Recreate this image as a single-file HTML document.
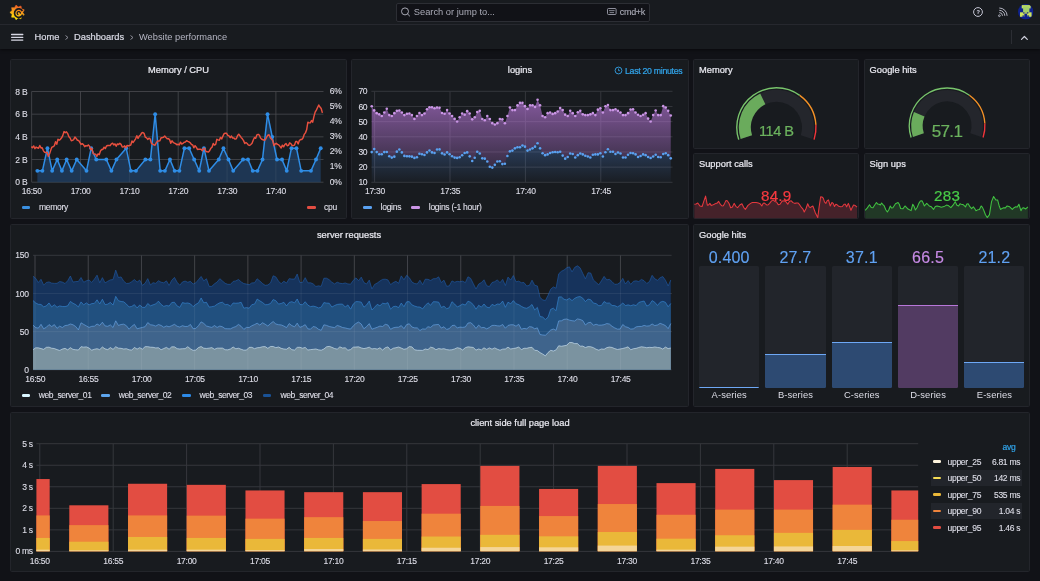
<!DOCTYPE html>
<html lang="en"><head><meta charset="utf-8"><title>Website performance - Dashboards - Grafana</title>
<style>
html,body{margin:0;padding:0}
body{width:1040px;height:581px;overflow:hidden;background:#111217;font-family:"Liberation Sans", Arial, sans-serif;position:relative;color:#dedee8}
#w{position:absolute;left:0;top:0;width:1040px;height:581px;will-change:transform}
.t{position:absolute;white-space:nowrap;line-height:1;margin:0;font-weight:400}
.p{position:absolute;box-sizing:border-box;background:#181b1f;border:1px solid #23252b;border-radius:1.5px}
.s{position:absolute;overflow:visible}
.b{position:absolute}
</style></head><body><div id="w">
<header>
<div class="b" style="left:0;top:0;width:1040px;height:49px;background:#181b1f;box-shadow:0 1px 3px rgba(0,0,0,.55)"></div>
<div class="b" style="left:0;top:24px;width:1040px;height:1px;background:#26282e"></div>
<svg class="s" style="left:10px;top:4.6px" width="15" height="15" viewBox="0 0 15 15" >
<defs><linearGradient id="lg" x1="0.2" y1="1" x2="0.5" y2="0"><stop offset="0" stop-color="#fff100"/><stop offset="0.45" stop-color="#fbb417"/><stop offset="1" stop-color="#f05a28"/></linearGradient></defs>
<polygon points="6.02,0.11 8.26,1.98 11.00,0.99 11.51,3.86 14.25,4.87 12.80,7.40 14.25,9.93 11.51,10.94 11.00,13.81 8.26,12.82 6.02,14.69 4.55,12.16 1.63,12.16 2.13,9.28 -0.10,7.40 2.13,5.52 1.63,2.64 4.55,2.64" fill="url(#lg)" stroke="url(#lg)" stroke-width="0.6" stroke-linejoin="round"/>
<path d="M12.7 9.6 A4.2 4.2 0 1 1 12.4 6.0" fill="none" stroke="#181b1f" stroke-width="1.7"/>
<path d="M10.3 8.6 A1.6 1.6 0 1 0 8.4 9.7" fill="none" stroke="#181b1f" stroke-width="1.3"/>
</svg>
<div class="b" style="left:395.5px;top:2.5px;width:254px;height:19px;box-sizing:border-box;background:#111217;border:1px solid #2c2e34;border-radius:2px"></div>
<svg class="s" style="left:400px;top:7px" width="10" height="10" viewBox="0 0 10 10" >
<circle cx="5" cy="4.4" r="3.5" fill="none" stroke="#b4b5c2" stroke-width="0.9"/><path d="M7.6 7 L9.6 9" stroke="#b4b5c2" stroke-width="0.9" stroke-linecap="round"/>
</svg>
<span class="t" style="left:413.80px;top:12.85px;font-size:9.3px;color:#a9aab6;transform:translate(0,-50%);">Search or jump to...</span>
<svg class="s" style="left:607.2px;top:8.4px" width="10" height="8" viewBox="0 0 10 8" >
<rect x="0.5" y="0.5" width="8.6" height="6" rx="1" fill="none" stroke="#9d9eab" stroke-width="0.9"/><path d="M2 2.6h5.6M2.6 4.6h4.4" stroke="#9d9eab" stroke-width="0.8"/>
</svg>
<span class="t" style="left:619.80px;top:11.55px;font-size:8.99px;color:#a9aab6;transform:translate(0,-50%);-webkit-text-stroke:0.12px #a9aab6;letter-spacing:-0.3px;">cmd+k</span>
<svg class="s" style="left:972px;top:6px" width="12" height="12" viewBox="0 0 12 12" >
<circle cx="6" cy="6" r="4.4" fill="none" stroke="#c4c5d3" stroke-width="1"/>
</svg>
<span class="t" style="left:978.10px;top:12.65px;font-size:5.6px;color:#c4c5d3;transform:translate(-50%,-50%);-webkit-text-stroke:0.12px #c4c5d3;font-weight:700;letter-spacing:0px;">?</span>
<svg class="s" style="left:996.6px;top:7.4px" width="11" height="11" viewBox="0 0 11 11" >
<circle cx="2.4" cy="8.7" r="0.9" fill="none" stroke="#c4c5d3" stroke-width="0.8"/><path d="M2.3 5.6 A3.2 3.2 0 0 1 5.5 8.8 M2.3 3.3 A5.5 5.5 0 0 1 7.8 8.8 M2.3 1 A7.8 7.8 0 0 1 10.1 8.8" fill="none" stroke="#c4c5d3" stroke-width="0.9"/>
</svg>
<svg class="s" style="left:1018px;top:3.8px" width="15.4" height="15.4" viewBox="0 0 15.4 15.4" >
<clipPath id="av"><circle cx="7.7" cy="7.7" r="7.7"/></clipPath>
<g clip-path="url(#av)"><rect x="0" y="0" width="15.4" height="15.4" fill="#0f228e"/>
<rect x="3.7" y="1.1" width="9" height="3.3" fill="#c3de62"/><rect x="5.1" y="2.4" width="6.3" height="5.9" fill="#a3d06a"/>
<rect x="2" y="8.3" width="11.6" height="4.5" fill="#cde45e"/><rect x="6.4" y="9.6" width="2.7" height="4" fill="#0f228e"/>
<rect x="5.2" y="8.3" width="1.2" height="1.3" fill="#0f228e"/><rect x="9.1" y="8.3" width="1.2" height="1.3" fill="#0f228e"/>
<rect x="4.4" y="11.5" width="2" height="1.3" fill="#0f228e"/><rect x="9.1" y="11.5" width="2" height="1.3" fill="#0f228e"/></g>
</svg>
</header>
<nav aria-label="Breadcrumbs">
<svg class="s" style="left:10px;top:32px" width="14" height="10" viewBox="0 0 14 10" >
<path d="M1.6 2.5h11.2M1.6 5.3h11.2M1.6 8.1h11.2" stroke="#d6d7e3" stroke-width="1.3" stroke-linecap="round"/>
</svg>
<span class="t" style="left:34.50px;top:37.85px;font-size:9.3px;color:#d8d9e4;transform:translate(0,-50%);-webkit-text-stroke:0.22px #d8d9e4;">Home</span>
<svg class="s" style="left:65.2px;top:35px" width="4" height="5" viewBox="0 0 4 5" >
<path d="M0.5 0.5 L3 2.5 L0.5 4.5" fill="none" stroke="#9a9ba6" stroke-width="0.9"/>
</svg>
<span class="t" style="left:74.00px;top:37.85px;font-size:9.3px;color:#d8d9e4;transform:translate(0,-50%);-webkit-text-stroke:0.22px #d8d9e4;">Dashboards</span>
<svg class="s" style="left:130.2px;top:35px" width="4" height="5" viewBox="0 0 4 5" >
<path d="M0.5 0.5 L3 2.5 L0.5 4.5" fill="none" stroke="#9a9ba6" stroke-width="0.9"/>
</svg>
<span class="t" style="left:139.00px;top:37.85px;font-size:9.3px;color:#b4b5c2;transform:translate(0,-50%);">Website performance</span>
<div class="b" style="left:1011px;top:30px;width:1px;height:14px;background:#2c2e34"></div>
<svg class="s" style="left:1020.2px;top:33.8px" width="9" height="8" viewBox="0 0 9 8" >
<path d="M1.5 5.4 L4.4 2.5 L7.3 5.4" fill="none" stroke="#d0d1de" stroke-width="1.2" stroke-linecap="round" stroke-linejoin="round"/>
</svg>
</nav>
<main>
<section aria-label="Memory / CPU">
<div class="p" style="left:10px;top:59px;width:337px;height:160px"></div>
<h2 class="t" style="left:178.50px;top:70.85px;font-size:9.3px;color:#e9e9f0;transform:translate(-50%,-50%);-webkit-text-stroke:0.22px #e9e9f0;">Memory / CPU</h2>
<svg class="s" style="left:0px;top:0px" width="1040" height="581" viewBox="0 0 1040 581" >
<path d="M31.65 182.20H323.5 M31.65 159.52H323.5 M31.65 136.85H323.5 M31.65 114.17H323.5 M31.65 91.50H323.5 M31.65 91.5V182.2 M80.50 91.5V182.2 M129.35 91.5V182.2 M178.20 91.5V182.2 M227.05 91.5V182.2 M275.90 91.5V182.2" stroke="#35373c" stroke-width="1" fill="none"/>
<path d="M37.36 170.86 L42.40 170.86 L47.45 148.19 L52.16 170.86 L57.21 159.52 L61.92 170.86 L66.64 159.52 L71.68 170.86 L76.73 159.52 L86.49 170.86 L91.20 148.19 L96.25 159.52 L106.35 159.52 L111.40 170.86 L116.44 159.52 L126.20 148.19 L130.91 170.86 L135.96 170.86 L145.39 159.52 L150.43 159.52 L155.15 114.17 L160.19 170.86 L164.91 170.86 L169.95 159.52 L174.67 170.86 L179.38 170.86 L184.42 148.19 L189.14 148.19 L194.18 159.52 L199.23 170.86 L203.94 148.19 L208.99 170.86 L218.75 159.52 L223.46 148.19 L228.51 159.52 L233.22 170.86 L242.98 159.52 L248.03 159.52 L252.74 170.86 L257.45 170.86 L262.50 159.52 L267.55 114.17 L272.26 136.85 L276.97 159.52 L282.02 159.52 L286.73 170.86 L291.45 148.19 L296.49 148.19 L301.20 170.86 L310.96 170.86 L316.01 159.52 L320.72 148.19 L320.72 182.20 L37.36 182.20 Z" fill="#1f3a59" fill-opacity="0.9"/>
<path d="M31.65 182.20H323.5 M31.65 159.52H323.5 M31.65 136.85H323.5 M31.65 114.17H323.5 M31.65 91.50H323.5 M31.65 91.5V182.2 M80.50 91.5V182.2 M129.35 91.5V182.2 M178.20 91.5V182.2 M227.05 91.5V182.2 M275.90 91.5V182.2" stroke="#ffffff" stroke-opacity="0.07" stroke-width="0.8" fill="none"/>
<path d="M37.36 170.86 L42.40 170.86 L47.45 148.19 L52.16 170.86 L57.21 159.52 L61.92 170.86 L66.64 159.52 L71.68 170.86 L76.73 159.52 L86.49 170.86 L91.20 148.19 L96.25 159.52 L106.35 159.52 L111.40 170.86 L116.44 159.52 L126.20 148.19 L130.91 170.86 L135.96 170.86 L145.39 159.52 L150.43 159.52 L155.15 114.17 L160.19 170.86 L164.91 170.86 L169.95 159.52 L174.67 170.86 L179.38 170.86 L184.42 148.19 L189.14 148.19 L194.18 159.52 L199.23 170.86 L203.94 148.19 L208.99 170.86 L218.75 159.52 L223.46 148.19 L228.51 159.52 L233.22 170.86 L242.98 159.52 L248.03 159.52 L252.74 170.86 L257.45 170.86 L262.50 159.52 L267.55 114.17 L272.26 136.85 L276.97 159.52 L282.02 159.52 L286.73 170.86 L291.45 148.19 L296.49 148.19 L301.20 170.86 L310.96 170.86 L316.01 159.52 L320.72 148.19" fill="none" stroke="#2f8de6" stroke-width="1.5" stroke-linejoin="round"/>
<g fill="#2f8de6"><circle cx="37.36" cy="170.86" r="1.95"/><circle cx="42.40" cy="170.86" r="1.95"/><circle cx="47.45" cy="148.19" r="1.95"/><circle cx="52.16" cy="170.86" r="1.95"/><circle cx="57.21" cy="159.52" r="1.95"/><circle cx="61.92" cy="170.86" r="1.95"/><circle cx="66.64" cy="159.52" r="1.95"/><circle cx="71.68" cy="170.86" r="1.95"/><circle cx="76.73" cy="159.52" r="1.95"/><circle cx="86.49" cy="170.86" r="1.95"/><circle cx="91.20" cy="148.19" r="1.95"/><circle cx="96.25" cy="159.52" r="1.95"/><circle cx="106.35" cy="159.52" r="1.95"/><circle cx="111.40" cy="170.86" r="1.95"/><circle cx="116.44" cy="159.52" r="1.95"/><circle cx="126.20" cy="148.19" r="1.95"/><circle cx="130.91" cy="170.86" r="1.95"/><circle cx="135.96" cy="170.86" r="1.95"/><circle cx="145.39" cy="159.52" r="1.95"/><circle cx="150.43" cy="159.52" r="1.95"/><circle cx="155.15" cy="114.17" r="1.95"/><circle cx="160.19" cy="170.86" r="1.95"/><circle cx="164.91" cy="170.86" r="1.95"/><circle cx="169.95" cy="159.52" r="1.95"/><circle cx="174.67" cy="170.86" r="1.95"/><circle cx="179.38" cy="170.86" r="1.95"/><circle cx="184.42" cy="148.19" r="1.95"/><circle cx="189.14" cy="148.19" r="1.95"/><circle cx="194.18" cy="159.52" r="1.95"/><circle cx="199.23" cy="170.86" r="1.95"/><circle cx="203.94" cy="148.19" r="1.95"/><circle cx="208.99" cy="170.86" r="1.95"/><circle cx="218.75" cy="159.52" r="1.95"/><circle cx="223.46" cy="148.19" r="1.95"/><circle cx="228.51" cy="159.52" r="1.95"/><circle cx="233.22" cy="170.86" r="1.95"/><circle cx="242.98" cy="159.52" r="1.95"/><circle cx="248.03" cy="159.52" r="1.95"/><circle cx="252.74" cy="170.86" r="1.95"/><circle cx="257.45" cy="170.86" r="1.95"/><circle cx="262.50" cy="159.52" r="1.95"/><circle cx="267.55" cy="114.17" r="1.95"/><circle cx="272.26" cy="136.85" r="1.95"/><circle cx="276.97" cy="159.52" r="1.95"/><circle cx="282.02" cy="159.52" r="1.95"/><circle cx="286.73" cy="170.86" r="1.95"/><circle cx="291.45" cy="148.19" r="1.95"/><circle cx="296.49" cy="148.19" r="1.95"/><circle cx="301.20" cy="170.86" r="1.95"/><circle cx="310.96" cy="170.86" r="1.95"/><circle cx="316.01" cy="159.52" r="1.95"/><circle cx="320.72" cy="148.19" r="1.95"/></g>
<path d="M31.30 146.67 L32.51 147.72 L33.72 145.92 L34.94 148.69 L36.15 147.05 L37.36 147.77 L38.58 148.25 L39.79 145.53 L41.00 147.91 L42.21 147.77 L43.43 150.85 L44.64 152.30 L45.85 152.43 L47.07 152.26 L48.28 156.34 L49.49 153.99 L50.71 150.36 L51.92 147.08 L53.13 146.73 L54.34 145.74 L55.56 141.79 L56.77 144.23 L57.98 139.29 L59.20 140.20 L60.41 139.32 L61.62 137.82 L62.84 135.37 L64.05 131.59 L65.26 132.65 L66.47 131.86 L67.69 133.61 L68.90 136.74 L70.11 137.99 L71.33 140.77 L72.54 140.42 L73.75 139.44 L74.96 137.07 L76.18 138.42 L77.39 140.27 L78.60 140.48 L79.82 142.40 L81.03 144.41 L82.24 143.68 L83.46 144.55 L84.67 146.74 L85.88 145.62 L87.09 146.10 L88.31 144.89 L89.52 146.16 L90.73 149.66 L91.95 148.37 L93.16 153.65 L94.37 154.01 L95.58 154.21 L96.80 156.43 L98.01 153.91 L99.22 154.72 L100.44 150.97 L101.65 149.55 L102.86 149.41 L104.08 147.17 L105.29 148.60 L106.50 146.03 L107.71 145.52 L108.93 145.36 L110.14 145.67 L111.35 143.82 L112.57 143.16 L113.78 144.94 L114.99 143.91 L116.21 146.29 L117.42 143.91 L118.63 144.47 L119.84 143.33 L121.06 144.38 L122.27 146.98 L123.48 146.88 L124.70 145.86 L125.91 147.92 L127.12 145.38 L128.33 145.94 L129.55 145.47 L130.76 145.04 L131.97 141.00 L133.19 142.44 L134.40 140.67 L135.61 138.79 L136.83 135.74 L138.04 138.40 L139.25 136.16 L140.46 135.06 L141.68 132.96 L142.89 132.55 L144.10 133.41 L145.32 137.16 L146.53 137.85 L147.74 139.36 L148.95 138.18 L150.17 138.82 L151.38 143.19 L152.59 144.04 L153.81 144.75 L155.02 145.30 L156.23 142.87 L157.45 141.07 L158.66 141.09 L159.87 140.82 L161.08 137.70 L162.30 137.66 L163.51 137.23 L164.72 136.00 L165.94 137.52 L167.15 138.67 L168.36 138.70 L169.57 139.54 L170.79 143.27 L172.00 140.78 L173.21 142.37 L174.43 143.06 L175.64 143.62 L176.85 144.79 L178.07 144.22 L179.28 144.92 L180.49 142.13 L181.70 144.01 L182.92 143.44 L184.13 142.30 L185.34 141.95 L186.56 140.65 L187.77 141.32 L188.98 141.87 L190.20 142.73 L191.41 144.44 L192.62 144.83 L193.83 147.76 L195.05 145.67 L196.26 147.19 L197.47 149.43 L198.69 149.26 L199.90 149.13 L201.11 149.34 L202.32 150.78 L203.54 148.43 L204.75 148.55 L205.96 151.51 L207.18 151.81 L208.39 152.13 L209.60 150.70 L210.82 148.32 L212.03 147.29 L213.24 143.54 L214.45 145.08 L215.67 144.44 L216.88 139.29 L218.09 139.85 L219.31 140.24 L220.52 137.38 L221.73 138.88 L222.94 136.08 L224.16 133.49 L225.37 133.30 L226.58 133.32 L227.80 135.33 L229.01 135.84 L230.22 137.64 L231.44 136.03 L232.65 138.00 L233.86 137.91 L235.07 139.13 L236.29 138.86 L237.50 135.64 L238.71 134.18 L239.93 135.78 L241.14 137.43 L242.35 138.83 L243.57 140.61 L244.78 143.47 L245.99 142.51 L247.20 143.47 L248.42 145.13 L249.63 145.40 L250.84 144.45 L252.06 143.18 L253.27 139.98 L254.48 137.50 L255.69 138.29 L256.91 134.86 L258.12 134.33 L259.33 135.01 L260.55 138.06 L261.76 139.21 L262.97 139.73 L264.19 140.40 L265.40 139.64 L266.61 137.14 L267.82 135.24 L269.04 134.77 L270.25 137.86 L271.46 139.12 L272.68 140.50 L273.89 145.52 L275.10 144.00 L276.31 143.36 L277.53 144.31 L278.74 144.85 L279.95 146.41 L281.17 148.00 L282.38 145.14 L283.59 146.81 L284.81 144.55 L286.02 143.56 L287.23 145.72 L288.44 145.42 L289.66 142.84 L290.87 143.51 L292.08 145.59 L293.30 145.50 L294.51 145.12 L295.72 141.52 L296.93 141.53 L298.15 143.91 L299.36 140.62 L300.57 139.56 L301.79 139.41 L303.00 137.99 L304.21 134.42 L305.43 132.89 L306.64 129.84 L307.85 122.25 L309.06 122.86 L310.28 122.84 L311.49 120.57 L312.70 122.14 L313.92 116.60 L315.13 112.16 L316.34 110.13 L317.56 107.56 L318.77 105.01 L319.98 107.01 L321.19 108.55 L322.41 112.93" fill="none" stroke="#e8503f" stroke-width="1.45" stroke-linejoin="round"/>
</svg>
<span class="t" style="left:27.30px;top:182.25px;font-size:8.56px;color:#dedee8;transform:translate(-100%,-50%);-webkit-text-stroke:0.12px #dedee8;letter-spacing:-0.3px;">0 B</span>
<span class="t" style="left:27.30px;top:159.57px;font-size:8.56px;color:#dedee8;transform:translate(-100%,-50%);-webkit-text-stroke:0.12px #dedee8;letter-spacing:-0.3px;">2 B</span>
<span class="t" style="left:27.30px;top:136.90px;font-size:8.56px;color:#dedee8;transform:translate(-100%,-50%);-webkit-text-stroke:0.12px #dedee8;letter-spacing:-0.3px;">4 B</span>
<span class="t" style="left:27.30px;top:114.22px;font-size:8.56px;color:#dedee8;transform:translate(-100%,-50%);-webkit-text-stroke:0.12px #dedee8;letter-spacing:-0.3px;">6 B</span>
<span class="t" style="left:27.30px;top:91.55px;font-size:8.56px;color:#dedee8;transform:translate(-100%,-50%);-webkit-text-stroke:0.12px #dedee8;letter-spacing:-0.3px;">8 B</span>
<span class="t" style="left:329.70px;top:181.55px;font-size:8.56px;color:#dedee8;transform:translate(0,-50%);-webkit-text-stroke:0.12px #dedee8;letter-spacing:-0.3px;">0%</span>
<span class="t" style="left:329.70px;top:166.43px;font-size:8.56px;color:#dedee8;transform:translate(0,-50%);-webkit-text-stroke:0.12px #dedee8;letter-spacing:-0.3px;">1%</span>
<span class="t" style="left:329.70px;top:151.32px;font-size:8.56px;color:#dedee8;transform:translate(0,-50%);-webkit-text-stroke:0.12px #dedee8;letter-spacing:-0.3px;">2%</span>
<span class="t" style="left:329.70px;top:136.20px;font-size:8.56px;color:#dedee8;transform:translate(0,-50%);-webkit-text-stroke:0.12px #dedee8;letter-spacing:-0.3px;">3%</span>
<span class="t" style="left:329.70px;top:121.08px;font-size:8.56px;color:#dedee8;transform:translate(0,-50%);-webkit-text-stroke:0.12px #dedee8;letter-spacing:-0.3px;">4%</span>
<span class="t" style="left:329.70px;top:105.97px;font-size:8.56px;color:#dedee8;transform:translate(0,-50%);-webkit-text-stroke:0.12px #dedee8;letter-spacing:-0.3px;">5%</span>
<span class="t" style="left:329.70px;top:90.85px;font-size:8.56px;color:#dedee8;transform:translate(0,-50%);-webkit-text-stroke:0.12px #dedee8;letter-spacing:-0.3px;">6%</span>
<span class="t" style="left:31.75px;top:191.35px;font-size:8.56px;color:#dedee8;transform:translate(-50%,-50%);-webkit-text-stroke:0.12px #dedee8;letter-spacing:-0.3px;">16:50</span>
<span class="t" style="left:80.60px;top:191.35px;font-size:8.56px;color:#dedee8;transform:translate(-50%,-50%);-webkit-text-stroke:0.12px #dedee8;letter-spacing:-0.3px;">17:00</span>
<span class="t" style="left:129.45px;top:191.35px;font-size:8.56px;color:#dedee8;transform:translate(-50%,-50%);-webkit-text-stroke:0.12px #dedee8;letter-spacing:-0.3px;">17:10</span>
<span class="t" style="left:178.30px;top:191.35px;font-size:8.56px;color:#dedee8;transform:translate(-50%,-50%);-webkit-text-stroke:0.12px #dedee8;letter-spacing:-0.3px;">17:20</span>
<span class="t" style="left:227.15px;top:191.35px;font-size:8.56px;color:#dedee8;transform:translate(-50%,-50%);-webkit-text-stroke:0.12px #dedee8;letter-spacing:-0.3px;">17:30</span>
<span class="t" style="left:276.00px;top:191.35px;font-size:8.56px;color:#dedee8;transform:translate(-50%,-50%);-webkit-text-stroke:0.12px #dedee8;letter-spacing:-0.3px;">17:40</span>
<div class="b" style="left:21.6px;top:206.2px;width:8.7px;height:2.4px;border-radius:1.2px;background:#3a8fe0"></div>
<span class="t" style="left:38.90px;top:207.45px;font-size:8.56px;color:#dedee8;transform:translate(0,-50%);-webkit-text-stroke:0.12px #dedee8;letter-spacing:-0.3px;">memory</span>
<div class="b" style="left:306.9px;top:206.2px;width:8.7px;height:2.4px;border-radius:1.2px;background:#e24d42"></div>
<span class="t" style="left:324.00px;top:207.45px;font-size:8.56px;color:#dedee8;transform:translate(0,-50%);-webkit-text-stroke:0.12px #dedee8;letter-spacing:-0.3px;">cpu</span>
</section>
<section aria-label="logins">
<div class="p" style="left:351px;top:59px;width:338px;height:160px"></div>
<h2 class="t" style="left:520.00px;top:70.85px;font-size:9.3px;color:#e9e9f0;transform:translate(-50%,-50%);-webkit-text-stroke:0.22px #e9e9f0;">logins</h2>
<svg class="s" style="left:614px;top:66px" width="9" height="9" viewBox="0 0 9 9" >
<circle cx="4.5" cy="4.5" r="3.4" fill="none" stroke="#33a2e5" stroke-width="0.9"/><path d="M4.5 2.6V4.7H6" fill="none" stroke="#33a2e5" stroke-width="0.8"/>
</svg>
<span class="t" style="left:625.00px;top:70.95px;font-size:8.77px;color:#31a4ea;transform:translate(0,-50%);-webkit-text-stroke:0.22px #31a4ea;letter-spacing:-0.3px;">Last 20 minutes</span>
<svg class="s" style="left:0px;top:0px" width="1040" height="581" viewBox="0 0 1040 581" >
<defs><linearGradient id="gp" x1="0" y1="0" x2="0" y2="1" gradientUnits="userSpaceOnUse"><stop offset="0" stop-color="#b877d9" stop-opacity="0.62"/><stop offset="1" stop-color="#b877d9" stop-opacity="0.18"/></linearGradient>
<linearGradient id="gb" x1="0" y1="0" x2="0" y2="1" gradientUnits="userSpaceOnUse"><stop offset="0" stop-color="#2c4a73" stop-opacity="0.95"/><stop offset="1" stop-color="#1f2c40" stop-opacity="0.6"/></linearGradient></defs>
<path d="M371.3 182.30H672.5 M371.3 167.13H672.5 M371.3 151.97H672.5 M371.3 136.80H672.5 M371.3 121.63H672.5 M371.3 106.47H672.5 M371.3 91.30H672.5 M374.60 91.3V182.3 M450.00 91.3V182.3 M525.40 91.3V182.3 M600.80 91.3V182.3" stroke="#35373c" stroke-width="1" fill="none"/>
<linearGradient id="gp2" gradientUnits="userSpaceOnUse" x1="0" y1="103.43333333333332" x2="0" y2="182.3"><stop offset="0" stop-color="#b877d9" stop-opacity="0.64"/><stop offset="1" stop-color="#b877d9" stop-opacity="0.10"/></linearGradient>
<linearGradient id="gb2" gradientUnits="userSpaceOnUse" x1="0" y1="144.38333333333333" x2="0" y2="182.3"><stop offset="0" stop-color="#5794f2" stop-opacity="0.30"/><stop offset="1" stop-color="#5794f2" stop-opacity="0.02"/></linearGradient>
<path d="M371.70 106.31 L374.21 110.41 L376.73 113.14 L379.24 114.35 L381.75 116.02 L384.26 112.53 L386.78 108.74 L389.29 115.11 L391.80 116.02 L394.32 113.14 L396.83 110.87 L399.34 110.56 L401.86 112.53 L404.37 115.11 L406.88 113.75 L409.39 113.44 L411.91 115.11 L414.42 118.90 L416.93 116.02 L419.45 112.99 L421.96 115.11 L424.47 113.44 L426.99 109.20 L429.50 107.22 L432.01 107.22 L434.52 108.29 L437.04 107.53 L439.55 107.83 L442.06 112.99 L444.58 113.75 L447.09 110.11 L449.60 113.44 L452.12 116.02 L454.63 118.90 L457.14 121.48 L459.65 117.23 L462.17 113.44 L464.68 114.66 L467.19 111.17 L469.71 113.44 L472.22 119.36 L474.73 117.23 L477.25 112.08 L479.76 110.87 L482.27 119.06 L484.78 120.27 L487.30 116.02 L489.81 119.06 L492.32 123.15 L494.84 124.52 L497.35 123.15 L499.86 119.06 L502.38 119.36 L504.89 123.30 L507.40 116.02 L509.91 107.53 L512.43 110.11 L514.94 110.11 L517.45 105.41 L519.97 102.83 L522.48 102.83 L524.99 106.16 L527.51 108.89 L530.02 105.25 L532.53 105.25 L535.04 106.92 L537.56 99.79 L540.07 105.25 L542.58 116.02 L545.10 117.23 L547.61 113.14 L550.12 112.53 L552.64 113.90 L555.15 113.14 L557.66 111.47 L560.17 107.98 L562.69 110.11 L565.20 114.66 L567.71 116.02 L570.23 110.87 L572.74 113.14 L575.25 116.02 L577.77 112.23 L580.28 110.87 L582.79 114.35 L585.30 115.11 L587.82 115.11 L590.33 114.35 L592.84 113.14 L595.36 115.11 L597.87 109.65 L600.38 108.29 L602.90 112.53 L605.41 106.31 L607.92 104.95 L610.43 110.11 L612.95 110.11 L615.46 109.20 L617.97 110.87 L620.49 112.53 L623.00 115.11 L625.51 115.11 L628.03 113.14 L630.54 109.50 L633.05 109.20 L635.57 112.53 L638.08 114.81 L640.59 116.02 L643.10 114.81 L645.62 113.14 L648.13 118.60 L650.64 121.48 L653.16 115.11 L655.67 110.56 L658.18 115.11 L660.69 115.11 L663.21 106.16 L665.72 107.53 L668.23 110.87 L670.75 115.57 L670.75 158.34 L668.23 155.15 L665.72 153.18 L663.21 153.94 L660.69 157.28 L658.18 156.97 L655.67 154.70 L653.16 156.52 L650.64 158.03 L648.13 156.97 L645.62 155.15 L643.10 154.39 L640.59 156.06 L638.08 156.97 L635.57 154.39 L633.05 153.18 L630.54 153.03 L628.03 154.70 L625.51 157.43 L623.00 157.43 L620.49 153.48 L617.97 152.57 L615.46 153.94 L612.95 151.81 L610.43 151.81 L607.92 149.24 L605.41 152.27 L602.90 156.52 L600.38 153.18 L597.87 154.39 L595.36 154.39 L592.84 154.70 L590.33 157.43 L587.82 156.52 L585.30 155.76 L582.79 154.39 L580.28 153.48 L577.77 155.15 L575.25 157.43 L572.74 153.94 L570.23 153.48 L567.71 156.97 L565.20 158.64 L562.69 155.61 L560.17 151.81 L557.66 152.27 L555.15 151.97 L552.64 152.27 L550.12 153.03 L547.61 154.39 L545.10 155.15 L542.58 153.18 L540.07 148.33 L537.56 143.32 L535.04 146.66 L532.53 148.33 L530.02 149.54 L527.51 150.60 L524.99 146.66 L522.48 145.44 L519.97 147.27 L517.45 147.27 L514.94 148.33 L512.43 150.60 L509.91 151.36 L507.40 156.06 L504.89 163.80 L502.38 164.10 L499.86 161.22 L497.35 161.52 L494.84 164.86 L492.32 167.59 L489.81 166.68 L487.30 161.52 L484.78 158.64 L482.27 158.34 L479.76 153.48 L477.25 151.81 L474.73 157.73 L472.22 161.07 L469.71 156.37 L467.19 152.42 L464.68 153.03 L462.17 155.30 L459.65 157.28 L457.14 157.88 L454.63 157.58 L452.12 156.21 L449.60 154.24 L447.09 152.42 L444.58 154.55 L442.06 153.33 L439.55 149.39 L437.04 149.54 L434.52 153.03 L432.01 152.42 L429.50 150.45 L426.99 152.42 L424.47 155.00 L421.96 154.24 L419.45 153.79 L416.93 157.28 L414.42 157.88 L411.91 156.67 L409.39 156.37 L406.88 156.21 L404.37 155.91 L401.86 152.42 L399.34 149.54 L396.83 151.66 L394.32 156.67 L391.80 157.58 L389.29 156.21 L386.78 151.97 L384.26 152.12 L381.75 154.24 L379.24 154.24 L376.73 152.12 L374.21 149.09 L371.70 152.12 Z" fill="url(#gp2)"/>
<path d="M371.70 152.12 L374.21 149.09 L376.73 152.12 L379.24 154.24 L381.75 154.24 L384.26 152.12 L386.78 151.97 L389.29 156.21 L391.80 157.58 L394.32 156.67 L396.83 151.66 L399.34 149.54 L401.86 152.42 L404.37 155.91 L406.88 156.21 L409.39 156.37 L411.91 156.67 L414.42 157.88 L416.93 157.28 L419.45 153.79 L421.96 154.24 L424.47 155.00 L426.99 152.42 L429.50 150.45 L432.01 152.42 L434.52 153.03 L437.04 149.54 L439.55 149.39 L442.06 153.33 L444.58 154.55 L447.09 152.42 L449.60 154.24 L452.12 156.21 L454.63 157.58 L457.14 157.88 L459.65 157.28 L462.17 155.30 L464.68 153.03 L467.19 152.42 L469.71 156.37 L472.22 161.07 L474.73 157.73 L477.25 151.81 L479.76 153.48 L482.27 158.34 L484.78 158.64 L487.30 161.52 L489.81 166.68 L492.32 167.59 L494.84 164.86 L497.35 161.52 L499.86 161.22 L502.38 164.10 L504.89 163.80 L507.40 156.06 L509.91 151.36 L512.43 150.60 L514.94 148.33 L517.45 147.27 L519.97 147.27 L522.48 145.44 L524.99 146.66 L527.51 150.60 L530.02 149.54 L532.53 148.33 L535.04 146.66 L537.56 143.32 L540.07 148.33 L542.58 153.18 L545.10 155.15 L547.61 154.39 L550.12 153.03 L552.64 152.27 L555.15 151.97 L557.66 152.27 L560.17 151.81 L562.69 155.61 L565.20 158.64 L567.71 156.97 L570.23 153.48 L572.74 153.94 L575.25 157.43 L577.77 155.15 L580.28 153.48 L582.79 154.39 L585.30 155.76 L587.82 156.52 L590.33 157.43 L592.84 154.70 L595.36 154.39 L597.87 154.39 L600.38 153.18 L602.90 156.52 L605.41 152.27 L607.92 149.24 L610.43 151.81 L612.95 151.81 L615.46 153.94 L617.97 152.57 L620.49 153.48 L623.00 157.43 L625.51 157.43 L628.03 154.70 L630.54 153.03 L633.05 153.18 L635.57 154.39 L638.08 156.97 L640.59 156.06 L643.10 154.39 L645.62 155.15 L648.13 156.97 L650.64 158.03 L653.16 156.52 L655.67 154.70 L658.18 156.97 L660.69 157.28 L663.21 153.94 L665.72 153.18 L668.23 155.15 L670.75 158.34 L670.75 182.30 L371.70 182.30 Z" fill="url(#gb2)"/>
<g fill="#ca95e5"><circle cx="371.70" cy="106.31" r="1.3"/><circle cx="374.21" cy="110.41" r="1.3"/><circle cx="376.73" cy="113.14" r="1.3"/><circle cx="379.24" cy="114.35" r="1.3"/><circle cx="381.75" cy="116.02" r="1.3"/><circle cx="384.26" cy="112.53" r="1.3"/><circle cx="386.78" cy="108.74" r="1.3"/><circle cx="389.29" cy="115.11" r="1.3"/><circle cx="391.80" cy="116.02" r="1.3"/><circle cx="394.32" cy="113.14" r="1.3"/><circle cx="396.83" cy="110.87" r="1.3"/><circle cx="399.34" cy="110.56" r="1.3"/><circle cx="401.86" cy="112.53" r="1.3"/><circle cx="404.37" cy="115.11" r="1.3"/><circle cx="406.88" cy="113.75" r="1.3"/><circle cx="409.39" cy="113.44" r="1.3"/><circle cx="411.91" cy="115.11" r="1.3"/><circle cx="414.42" cy="118.90" r="1.3"/><circle cx="416.93" cy="116.02" r="1.3"/><circle cx="419.45" cy="112.99" r="1.3"/><circle cx="421.96" cy="115.11" r="1.3"/><circle cx="424.47" cy="113.44" r="1.3"/><circle cx="426.99" cy="109.20" r="1.3"/><circle cx="429.50" cy="107.22" r="1.3"/><circle cx="432.01" cy="107.22" r="1.3"/><circle cx="434.52" cy="108.29" r="1.3"/><circle cx="437.04" cy="107.53" r="1.3"/><circle cx="439.55" cy="107.83" r="1.3"/><circle cx="442.06" cy="112.99" r="1.3"/><circle cx="444.58" cy="113.75" r="1.3"/><circle cx="447.09" cy="110.11" r="1.3"/><circle cx="449.60" cy="113.44" r="1.3"/><circle cx="452.12" cy="116.02" r="1.3"/><circle cx="454.63" cy="118.90" r="1.3"/><circle cx="457.14" cy="121.48" r="1.3"/><circle cx="459.65" cy="117.23" r="1.3"/><circle cx="462.17" cy="113.44" r="1.3"/><circle cx="464.68" cy="114.66" r="1.3"/><circle cx="467.19" cy="111.17" r="1.3"/><circle cx="469.71" cy="113.44" r="1.3"/><circle cx="472.22" cy="119.36" r="1.3"/><circle cx="474.73" cy="117.23" r="1.3"/><circle cx="477.25" cy="112.08" r="1.3"/><circle cx="479.76" cy="110.87" r="1.3"/><circle cx="482.27" cy="119.06" r="1.3"/><circle cx="484.78" cy="120.27" r="1.3"/><circle cx="487.30" cy="116.02" r="1.3"/><circle cx="489.81" cy="119.06" r="1.3"/><circle cx="492.32" cy="123.15" r="1.3"/><circle cx="494.84" cy="124.52" r="1.3"/><circle cx="497.35" cy="123.15" r="1.3"/><circle cx="499.86" cy="119.06" r="1.3"/><circle cx="502.38" cy="119.36" r="1.3"/><circle cx="504.89" cy="123.30" r="1.3"/><circle cx="507.40" cy="116.02" r="1.3"/><circle cx="509.91" cy="107.53" r="1.3"/><circle cx="512.43" cy="110.11" r="1.3"/><circle cx="514.94" cy="110.11" r="1.3"/><circle cx="517.45" cy="105.41" r="1.3"/><circle cx="519.97" cy="102.83" r="1.3"/><circle cx="522.48" cy="102.83" r="1.3"/><circle cx="524.99" cy="106.16" r="1.3"/><circle cx="527.51" cy="108.89" r="1.3"/><circle cx="530.02" cy="105.25" r="1.3"/><circle cx="532.53" cy="105.25" r="1.3"/><circle cx="535.04" cy="106.92" r="1.3"/><circle cx="537.56" cy="99.79" r="1.3"/><circle cx="540.07" cy="105.25" r="1.3"/><circle cx="542.58" cy="116.02" r="1.3"/><circle cx="545.10" cy="117.23" r="1.3"/><circle cx="547.61" cy="113.14" r="1.3"/><circle cx="550.12" cy="112.53" r="1.3"/><circle cx="552.64" cy="113.90" r="1.3"/><circle cx="555.15" cy="113.14" r="1.3"/><circle cx="557.66" cy="111.47" r="1.3"/><circle cx="560.17" cy="107.98" r="1.3"/><circle cx="562.69" cy="110.11" r="1.3"/><circle cx="565.20" cy="114.66" r="1.3"/><circle cx="567.71" cy="116.02" r="1.3"/><circle cx="570.23" cy="110.87" r="1.3"/><circle cx="572.74" cy="113.14" r="1.3"/><circle cx="575.25" cy="116.02" r="1.3"/><circle cx="577.77" cy="112.23" r="1.3"/><circle cx="580.28" cy="110.87" r="1.3"/><circle cx="582.79" cy="114.35" r="1.3"/><circle cx="585.30" cy="115.11" r="1.3"/><circle cx="587.82" cy="115.11" r="1.3"/><circle cx="590.33" cy="114.35" r="1.3"/><circle cx="592.84" cy="113.14" r="1.3"/><circle cx="595.36" cy="115.11" r="1.3"/><circle cx="597.87" cy="109.65" r="1.3"/><circle cx="600.38" cy="108.29" r="1.3"/><circle cx="602.90" cy="112.53" r="1.3"/><circle cx="605.41" cy="106.31" r="1.3"/><circle cx="607.92" cy="104.95" r="1.3"/><circle cx="610.43" cy="110.11" r="1.3"/><circle cx="612.95" cy="110.11" r="1.3"/><circle cx="615.46" cy="109.20" r="1.3"/><circle cx="617.97" cy="110.87" r="1.3"/><circle cx="620.49" cy="112.53" r="1.3"/><circle cx="623.00" cy="115.11" r="1.3"/><circle cx="625.51" cy="115.11" r="1.3"/><circle cx="628.03" cy="113.14" r="1.3"/><circle cx="630.54" cy="109.50" r="1.3"/><circle cx="633.05" cy="109.20" r="1.3"/><circle cx="635.57" cy="112.53" r="1.3"/><circle cx="638.08" cy="114.81" r="1.3"/><circle cx="640.59" cy="116.02" r="1.3"/><circle cx="643.10" cy="114.81" r="1.3"/><circle cx="645.62" cy="113.14" r="1.3"/><circle cx="648.13" cy="118.60" r="1.3"/><circle cx="650.64" cy="121.48" r="1.3"/><circle cx="653.16" cy="115.11" r="1.3"/><circle cx="655.67" cy="110.56" r="1.3"/><circle cx="658.18" cy="115.11" r="1.3"/><circle cx="660.69" cy="115.11" r="1.3"/><circle cx="663.21" cy="106.16" r="1.3"/><circle cx="665.72" cy="107.53" r="1.3"/><circle cx="668.23" cy="110.87" r="1.3"/><circle cx="670.75" cy="115.57" r="1.3"/></g>
<g fill="#5aa1f0"><circle cx="371.70" cy="152.12" r="1.3"/><circle cx="374.21" cy="149.09" r="1.3"/><circle cx="376.73" cy="152.12" r="1.3"/><circle cx="379.24" cy="154.24" r="1.3"/><circle cx="381.75" cy="154.24" r="1.3"/><circle cx="384.26" cy="152.12" r="1.3"/><circle cx="386.78" cy="151.97" r="1.3"/><circle cx="389.29" cy="156.21" r="1.3"/><circle cx="391.80" cy="157.58" r="1.3"/><circle cx="394.32" cy="156.67" r="1.3"/><circle cx="396.83" cy="151.66" r="1.3"/><circle cx="399.34" cy="149.54" r="1.3"/><circle cx="401.86" cy="152.42" r="1.3"/><circle cx="404.37" cy="155.91" r="1.3"/><circle cx="406.88" cy="156.21" r="1.3"/><circle cx="409.39" cy="156.37" r="1.3"/><circle cx="411.91" cy="156.67" r="1.3"/><circle cx="414.42" cy="157.88" r="1.3"/><circle cx="416.93" cy="157.28" r="1.3"/><circle cx="419.45" cy="153.79" r="1.3"/><circle cx="421.96" cy="154.24" r="1.3"/><circle cx="424.47" cy="155.00" r="1.3"/><circle cx="426.99" cy="152.42" r="1.3"/><circle cx="429.50" cy="150.45" r="1.3"/><circle cx="432.01" cy="152.42" r="1.3"/><circle cx="434.52" cy="153.03" r="1.3"/><circle cx="437.04" cy="149.54" r="1.3"/><circle cx="439.55" cy="149.39" r="1.3"/><circle cx="442.06" cy="153.33" r="1.3"/><circle cx="444.58" cy="154.55" r="1.3"/><circle cx="447.09" cy="152.42" r="1.3"/><circle cx="449.60" cy="154.24" r="1.3"/><circle cx="452.12" cy="156.21" r="1.3"/><circle cx="454.63" cy="157.58" r="1.3"/><circle cx="457.14" cy="157.88" r="1.3"/><circle cx="459.65" cy="157.28" r="1.3"/><circle cx="462.17" cy="155.30" r="1.3"/><circle cx="464.68" cy="153.03" r="1.3"/><circle cx="467.19" cy="152.42" r="1.3"/><circle cx="469.71" cy="156.37" r="1.3"/><circle cx="472.22" cy="161.07" r="1.3"/><circle cx="474.73" cy="157.73" r="1.3"/><circle cx="477.25" cy="151.81" r="1.3"/><circle cx="479.76" cy="153.48" r="1.3"/><circle cx="482.27" cy="158.34" r="1.3"/><circle cx="484.78" cy="158.64" r="1.3"/><circle cx="487.30" cy="161.52" r="1.3"/><circle cx="489.81" cy="166.68" r="1.3"/><circle cx="492.32" cy="167.59" r="1.3"/><circle cx="494.84" cy="164.86" r="1.3"/><circle cx="497.35" cy="161.52" r="1.3"/><circle cx="499.86" cy="161.22" r="1.3"/><circle cx="502.38" cy="164.10" r="1.3"/><circle cx="504.89" cy="163.80" r="1.3"/><circle cx="507.40" cy="156.06" r="1.3"/><circle cx="509.91" cy="151.36" r="1.3"/><circle cx="512.43" cy="150.60" r="1.3"/><circle cx="514.94" cy="148.33" r="1.3"/><circle cx="517.45" cy="147.27" r="1.3"/><circle cx="519.97" cy="147.27" r="1.3"/><circle cx="522.48" cy="145.44" r="1.3"/><circle cx="524.99" cy="146.66" r="1.3"/><circle cx="527.51" cy="150.60" r="1.3"/><circle cx="530.02" cy="149.54" r="1.3"/><circle cx="532.53" cy="148.33" r="1.3"/><circle cx="535.04" cy="146.66" r="1.3"/><circle cx="537.56" cy="143.32" r="1.3"/><circle cx="540.07" cy="148.33" r="1.3"/><circle cx="542.58" cy="153.18" r="1.3"/><circle cx="545.10" cy="155.15" r="1.3"/><circle cx="547.61" cy="154.39" r="1.3"/><circle cx="550.12" cy="153.03" r="1.3"/><circle cx="552.64" cy="152.27" r="1.3"/><circle cx="555.15" cy="151.97" r="1.3"/><circle cx="557.66" cy="152.27" r="1.3"/><circle cx="560.17" cy="151.81" r="1.3"/><circle cx="562.69" cy="155.61" r="1.3"/><circle cx="565.20" cy="158.64" r="1.3"/><circle cx="567.71" cy="156.97" r="1.3"/><circle cx="570.23" cy="153.48" r="1.3"/><circle cx="572.74" cy="153.94" r="1.3"/><circle cx="575.25" cy="157.43" r="1.3"/><circle cx="577.77" cy="155.15" r="1.3"/><circle cx="580.28" cy="153.48" r="1.3"/><circle cx="582.79" cy="154.39" r="1.3"/><circle cx="585.30" cy="155.76" r="1.3"/><circle cx="587.82" cy="156.52" r="1.3"/><circle cx="590.33" cy="157.43" r="1.3"/><circle cx="592.84" cy="154.70" r="1.3"/><circle cx="595.36" cy="154.39" r="1.3"/><circle cx="597.87" cy="154.39" r="1.3"/><circle cx="600.38" cy="153.18" r="1.3"/><circle cx="602.90" cy="156.52" r="1.3"/><circle cx="605.41" cy="152.27" r="1.3"/><circle cx="607.92" cy="149.24" r="1.3"/><circle cx="610.43" cy="151.81" r="1.3"/><circle cx="612.95" cy="151.81" r="1.3"/><circle cx="615.46" cy="153.94" r="1.3"/><circle cx="617.97" cy="152.57" r="1.3"/><circle cx="620.49" cy="153.48" r="1.3"/><circle cx="623.00" cy="157.43" r="1.3"/><circle cx="625.51" cy="157.43" r="1.3"/><circle cx="628.03" cy="154.70" r="1.3"/><circle cx="630.54" cy="153.03" r="1.3"/><circle cx="633.05" cy="153.18" r="1.3"/><circle cx="635.57" cy="154.39" r="1.3"/><circle cx="638.08" cy="156.97" r="1.3"/><circle cx="640.59" cy="156.06" r="1.3"/><circle cx="643.10" cy="154.39" r="1.3"/><circle cx="645.62" cy="155.15" r="1.3"/><circle cx="648.13" cy="156.97" r="1.3"/><circle cx="650.64" cy="158.03" r="1.3"/><circle cx="653.16" cy="156.52" r="1.3"/><circle cx="655.67" cy="154.70" r="1.3"/><circle cx="658.18" cy="156.97" r="1.3"/><circle cx="660.69" cy="157.28" r="1.3"/><circle cx="663.21" cy="153.94" r="1.3"/><circle cx="665.72" cy="153.18" r="1.3"/><circle cx="668.23" cy="155.15" r="1.3"/><circle cx="670.75" cy="158.34" r="1.3"/></g>
</svg>
<span class="t" style="left:367.30px;top:182.35px;font-size:8.56px;color:#dedee8;transform:translate(-100%,-50%);-webkit-text-stroke:0.12px #dedee8;letter-spacing:-0.3px;">10</span>
<span class="t" style="left:367.30px;top:167.18px;font-size:8.56px;color:#dedee8;transform:translate(-100%,-50%);-webkit-text-stroke:0.12px #dedee8;letter-spacing:-0.3px;">20</span>
<span class="t" style="left:367.30px;top:152.02px;font-size:8.56px;color:#dedee8;transform:translate(-100%,-50%);-webkit-text-stroke:0.12px #dedee8;letter-spacing:-0.3px;">30</span>
<span class="t" style="left:367.30px;top:136.85px;font-size:8.56px;color:#dedee8;transform:translate(-100%,-50%);-webkit-text-stroke:0.12px #dedee8;letter-spacing:-0.3px;">40</span>
<span class="t" style="left:367.30px;top:121.68px;font-size:8.56px;color:#dedee8;transform:translate(-100%,-50%);-webkit-text-stroke:0.12px #dedee8;letter-spacing:-0.3px;">50</span>
<span class="t" style="left:367.30px;top:106.52px;font-size:8.56px;color:#dedee8;transform:translate(-100%,-50%);-webkit-text-stroke:0.12px #dedee8;letter-spacing:-0.3px;">60</span>
<span class="t" style="left:367.30px;top:91.35px;font-size:8.56px;color:#dedee8;transform:translate(-100%,-50%);-webkit-text-stroke:0.12px #dedee8;letter-spacing:-0.3px;">70</span>
<span class="t" style="left:374.90px;top:191.35px;font-size:8.56px;color:#dedee8;transform:translate(-50%,-50%);-webkit-text-stroke:0.12px #dedee8;letter-spacing:-0.3px;">17:30</span>
<span class="t" style="left:450.30px;top:191.35px;font-size:8.56px;color:#dedee8;transform:translate(-50%,-50%);-webkit-text-stroke:0.12px #dedee8;letter-spacing:-0.3px;">17:35</span>
<span class="t" style="left:525.70px;top:191.35px;font-size:8.56px;color:#dedee8;transform:translate(-50%,-50%);-webkit-text-stroke:0.12px #dedee8;letter-spacing:-0.3px;">17:40</span>
<span class="t" style="left:601.10px;top:191.35px;font-size:8.56px;color:#dedee8;transform:translate(-50%,-50%);-webkit-text-stroke:0.12px #dedee8;letter-spacing:-0.3px;">17:45</span>
<div class="b" style="left:362.8px;top:206.2px;width:9.2px;height:2.4px;border-radius:1.2px;background:#5aa1f0"></div>
<span class="t" style="left:380.60px;top:207.45px;font-size:8.56px;color:#dedee8;transform:translate(0,-50%);-webkit-text-stroke:0.12px #dedee8;letter-spacing:-0.3px;">logins</span>
<div class="b" style="left:411px;top:206.2px;width:9.2px;height:2.4px;border-radius:1.2px;background:#ca95e5"></div>
<span class="t" style="left:428.80px;top:207.45px;font-size:8.56px;color:#dedee8;transform:translate(0,-50%);-webkit-text-stroke:0.12px #dedee8;letter-spacing:-0.3px;">logins (-1 hour)</span>
</section>
<section aria-label="Memory">
<div class="p" style="left:693px;top:59px;width:166px;height:90px"></div>
<h2 class="t" style="left:699.00px;top:70.85px;font-size:9.3px;color:#e9e9f0;transform:translate(0,-50%);-webkit-text-stroke:0.22px #e9e9f0;">Memory</h2>
<svg class="s" style="left:0px;top:0px" width="1040" height="581" viewBox="0 0 1040 581" >
<path d="M740.64 139.02 A37.60 37.60 0 1 1 812.16 139.02 L800.75 135.31 A25.60 25.60 0 1 0 752.05 135.31 Z" fill="#24262c"/>
<path d="M740.64 139.02 A37.60 37.60 0 0 1 760.22 93.46 L765.38 104.29 A25.60 25.60 0 0 0 752.05 135.31 Z" fill="#6aab5c"/>
<path d="M738.07 139.85 A40.30 40.30 0 0 1 800.13 94.83 L799.30 95.96 A38.90 38.90 0 0 0 739.40 139.42 Z" fill="#78c46c"/>
<path d="M800.13 94.83 A40.30 40.30 0 0 1 816.62 124.87 L815.22 124.96 A38.90 38.90 0 0 0 799.30 95.96 Z" fill="#f59227"/>
<path d="M816.62 124.87 A40.30 40.30 0 0 1 814.73 139.85 L813.40 139.42 A38.90 38.90 0 0 0 815.22 124.96 Z" fill="#f2353b"/>
</svg>
<span class="t" style="left:776.30px;top:131.45px;font-size:14.6px;color:#6cb35e;transform:translate(-50%,-50%);-webkit-text-stroke:0.22px #6cb35e;letter-spacing:-0.5px;">114 B</span>
</section>
<section aria-label="Google hits gauge">
<div class="p" style="left:864px;top:59px;width:166px;height:90px"></div>
<h2 class="t" style="left:869.60px;top:70.85px;font-size:9.3px;color:#e9e9f0;transform:translate(0,-50%);-webkit-text-stroke:0.22px #e9e9f0;">Google hits</h2>
<svg class="s" style="left:0px;top:0px" width="1040" height="581" viewBox="0 0 1040 581" >
<path d="M912.95 136.90 A35.91 35.91 0 1 1 981.25 136.90 L970.35 133.35 A24.45 24.45 0 1 0 923.85 133.35 Z" fill="#24262c"/>
<path d="M912.95 136.90 A35.91 35.91 0 0 1 913.93 112.06 L924.51 116.44 A24.45 24.45 0 0 0 923.85 133.35 Z" fill="#6aab5c"/>
<path d="M910.50 137.69 A38.49 38.49 0 0 1 969.76 94.69 L968.97 95.77 A37.15 37.15 0 0 0 911.77 137.28 Z" fill="#78c46c"/>
<path d="M969.76 94.69 A38.49 38.49 0 0 1 985.51 123.38 L984.18 123.47 A37.15 37.15 0 0 0 968.97 95.77 Z" fill="#f59227"/>
<path d="M985.51 123.38 A38.49 38.49 0 0 1 983.70 137.69 L982.43 137.28 A37.15 37.15 0 0 0 984.18 123.47 Z" fill="#f2353b"/>
</svg>
<span class="t" style="left:947.00px;top:130.65px;font-size:17px;color:#6cb35e;transform:translate(-50%,-50%);-webkit-text-stroke:0.22px #6cb35e;letter-spacing:-0.6px;">57.1</span>
</section>
<section aria-label="Support calls">
<div class="p" style="left:693px;top:153px;width:166px;height:66px"></div>
<h2 class="t" style="left:699.00px;top:164.85px;font-size:9.3px;color:#e9e9f0;transform:translate(0,-50%);-webkit-text-stroke:0.22px #e9e9f0;">Support calls</h2>
<svg class="s" style="left:0px;top:0px" width="1040" height="581" viewBox="0 0 1040 581" >
<path d="M694.33 204.25 L696.06 204.01 L697.79 203.04 L699.95 205.98 L702.11 206.50 L703.85 201.17 L705.58 196.11 L707.31 205.11 L708.61 204.91 L709.90 203.38 L711.20 205.61 L712.50 205.11 L714.23 204.31 L715.96 203.38 L717.26 203.07 L718.56 201.31 L720.29 204.35 L722.02 205.98 L723.32 205.80 L724.61 203.38 L725.91 200.64 L727.21 200.79 L728.94 203.22 L730.67 207.71 L732.40 207.09 L734.13 203.38 L735.86 206.31 L737.59 207.71 L739.76 204.97 L741.92 203.73 L743.65 207.34 L745.38 209.44 L747.98 205.38 L750.57 203.38 L752.31 202.51 L754.04 202.52 L756.20 202.59 L758.36 203.04 L760.09 203.66 L761.82 205.98 L763.12 203.38 L764.42 203.04 L765.72 204.10 L767.02 205.11 L768.31 204.71 L769.61 203.38 L771.34 201.09 L773.07 199.92 L774.80 201.46 L776.54 202.00 L778.27 204.62 L780.00 204.25 L782.16 201.13 L784.32 200.79 L786.05 201.83 L787.78 204.25 L789.52 201.24 L791.25 200.79 L792.98 202.64 L794.71 203.38 L796.44 202.94 L798.17 203.04 L799.90 205.18 L801.63 207.71 L802.93 209.08 L804.23 212.04 L805.96 208.75 L807.69 203.73 L808.99 206.53 L810.28 207.71 L811.58 206.68 L812.88 205.98 L815.30 212.79 L817.73 217.57 L819.20 206.35 L820.67 196.81 L821.97 197.01 L823.26 198.19 L824.56 202.21 L825.86 203.38 L827.16 200.80 L828.46 199.92 L830.19 205.98 L831.92 202.52 L833.22 203.40 L834.51 206.50 L835.81 204.17 L837.11 204.77 L838.84 206.34 L840.57 206.84 L842.30 206.54 L844.03 204.25 L845.33 204.15 L846.63 206.84 L848.36 203.38 L849.66 206.78 L850.96 210.31 L852.25 207.39 L853.55 205.11 L855.28 205.62 L857.01 207.19 L857.01 218.20 L694.33 218.20 Z" fill="#45222a"/>
<path d="M694.33 204.25 L696.06 204.01 L697.79 203.04 L699.95 205.98 L702.11 206.50 L703.85 201.17 L705.58 196.11 L707.31 205.11 L708.61 204.91 L709.90 203.38 L711.20 205.61 L712.50 205.11 L714.23 204.31 L715.96 203.38 L717.26 203.07 L718.56 201.31 L720.29 204.35 L722.02 205.98 L723.32 205.80 L724.61 203.38 L725.91 200.64 L727.21 200.79 L728.94 203.22 L730.67 207.71 L732.40 207.09 L734.13 203.38 L735.86 206.31 L737.59 207.71 L739.76 204.97 L741.92 203.73 L743.65 207.34 L745.38 209.44 L747.98 205.38 L750.57 203.38 L752.31 202.51 L754.04 202.52 L756.20 202.59 L758.36 203.04 L760.09 203.66 L761.82 205.98 L763.12 203.38 L764.42 203.04 L765.72 204.10 L767.02 205.11 L768.31 204.71 L769.61 203.38 L771.34 201.09 L773.07 199.92 L774.80 201.46 L776.54 202.00 L778.27 204.62 L780.00 204.25 L782.16 201.13 L784.32 200.79 L786.05 201.83 L787.78 204.25 L789.52 201.24 L791.25 200.79 L792.98 202.64 L794.71 203.38 L796.44 202.94 L798.17 203.04 L799.90 205.18 L801.63 207.71 L802.93 209.08 L804.23 212.04 L805.96 208.75 L807.69 203.73 L808.99 206.53 L810.28 207.71 L811.58 206.68 L812.88 205.98 L815.30 212.79 L817.73 217.57 L819.20 206.35 L820.67 196.81 L821.97 197.01 L823.26 198.19 L824.56 202.21 L825.86 203.38 L827.16 200.80 L828.46 199.92 L830.19 205.98 L831.92 202.52 L833.22 203.40 L834.51 206.50 L835.81 204.17 L837.11 204.77 L838.84 206.34 L840.57 206.84 L842.30 206.54 L844.03 204.25 L845.33 204.15 L846.63 206.84 L848.36 203.38 L849.66 206.78 L850.96 210.31 L852.25 207.39 L853.55 205.11 L855.28 205.62 L857.01 207.19" fill="none" stroke="#e4383e" stroke-width="1.05" stroke-linejoin="round"/>
</svg>
<span class="t" style="left:776.20px;top:195.75px;font-size:15.2px;color:#f53a40;transform:translate(-50%,-50%);-webkit-text-stroke:0.22px #f53a40;letter-spacing:0.2px;">84.9</span>
</section>
<section aria-label="Sign ups">
<div class="p" style="left:864px;top:153px;width:166px;height:66px"></div>
<h2 class="t" style="left:869.60px;top:164.85px;font-size:9.3px;color:#e9e9f0;transform:translate(0,-50%);-webkit-text-stroke:0.22px #e9e9f0;">Sign ups</h2>
<svg class="s" style="left:0px;top:0px" width="1040" height="581" viewBox="0 0 1040 581" >
<path d="M865.19 210.31 L867.36 207.90 L869.52 204.77 L871.25 207.45 L872.98 207.71 L874.71 204.98 L876.44 202.52 L877.74 204.04 L879.04 204.25 L880.34 205.00 L881.63 203.04 L882.93 204.57 L884.23 205.98 L885.79 209.74 L887.35 212.04 L888.82 209.72 L890.29 205.98 L891.59 207.96 L892.88 207.71 L895.48 203.67 L898.08 202.52 L899.37 204.52 L900.67 208.57 L902.83 208.82 L905.00 205.98 L908.03 209.08 L911.06 210.65 L912.79 204.25 L914.08 206.36 L915.38 209.96 L917.11 207.43 L918.84 203.38 L920.40 201.05 L921.96 200.79 L923.17 202.95 L924.38 205.98 L926.63 203.38 L927.93 204.50 L929.23 205.98 L931.39 206.86 L933.55 209.44 L935.29 206.58 L937.02 205.98 L939.18 206.61 L941.34 207.19 L943.94 206.61 L946.54 205.11 L948.70 205.85 L950.86 207.71 L953.03 205.18 L955.19 201.65 L956.92 205.32 L958.65 205.98 L959.95 203.73 L961.25 204.25 L963.41 204.86 L965.57 206.84 L966.87 204.01 L968.17 203.73 L969.90 206.70 L971.63 208.57 L973.36 206.84 L974.66 208.48 L975.96 210.65 L977.69 209.86 L979.42 209.44 L981.15 205.98 L982.45 207.35 L983.75 210.31 L985.48 214.80 L987.21 217.57 L989.46 214.63 L991.53 201.65 L993.61 196.46 L995.86 199.92 L997.59 199.92 L999.06 205.49 L1000.53 209.44 L1002.09 208.41 L1003.65 207.71 L1005.38 207.86 L1007.11 205.98 L1009.71 206.87 L1012.30 209.44 L1014.03 207.66 L1015.76 206.84 L1017.32 206.97 L1018.88 204.25 L1020.96 210.65 L1022.25 208.33 L1023.55 207.71 L1025.80 208.92 L1027.88 206.84 L1027.88 218.20 L865.19 218.20 Z" fill="#213826"/>
<path d="M865.19 210.31 L867.36 207.90 L869.52 204.77 L871.25 207.45 L872.98 207.71 L874.71 204.98 L876.44 202.52 L877.74 204.04 L879.04 204.25 L880.34 205.00 L881.63 203.04 L882.93 204.57 L884.23 205.98 L885.79 209.74 L887.35 212.04 L888.82 209.72 L890.29 205.98 L891.59 207.96 L892.88 207.71 L895.48 203.67 L898.08 202.52 L899.37 204.52 L900.67 208.57 L902.83 208.82 L905.00 205.98 L908.03 209.08 L911.06 210.65 L912.79 204.25 L914.08 206.36 L915.38 209.96 L917.11 207.43 L918.84 203.38 L920.40 201.05 L921.96 200.79 L923.17 202.95 L924.38 205.98 L926.63 203.38 L927.93 204.50 L929.23 205.98 L931.39 206.86 L933.55 209.44 L935.29 206.58 L937.02 205.98 L939.18 206.61 L941.34 207.19 L943.94 206.61 L946.54 205.11 L948.70 205.85 L950.86 207.71 L953.03 205.18 L955.19 201.65 L956.92 205.32 L958.65 205.98 L959.95 203.73 L961.25 204.25 L963.41 204.86 L965.57 206.84 L966.87 204.01 L968.17 203.73 L969.90 206.70 L971.63 208.57 L973.36 206.84 L974.66 208.48 L975.96 210.65 L977.69 209.86 L979.42 209.44 L981.15 205.98 L982.45 207.35 L983.75 210.31 L985.48 214.80 L987.21 217.57 L989.46 214.63 L991.53 201.65 L993.61 196.46 L995.86 199.92 L997.59 199.92 L999.06 205.49 L1000.53 209.44 L1002.09 208.41 L1003.65 207.71 L1005.38 207.86 L1007.11 205.98 L1009.71 206.87 L1012.30 209.44 L1014.03 207.66 L1015.76 206.84 L1017.32 206.97 L1018.88 204.25 L1020.96 210.65 L1022.25 208.33 L1023.55 207.71 L1025.80 208.92 L1027.88 206.84" fill="none" stroke="#41c241" stroke-width="1.05" stroke-linejoin="round"/>
</svg>
<span class="t" style="left:947.20px;top:195.75px;font-size:15.2px;color:#48cc48;transform:translate(-50%,-50%);-webkit-text-stroke:0.22px #48cc48;letter-spacing:0.3px;">283</span>
</section>
<section aria-label="server requests">
<div class="p" style="left:10px;top:224px;width:679px;height:183px"></div>
<h2 class="t" style="left:349.00px;top:235.75px;font-size:9.3px;color:#e9e9f0;transform:translate(-50%,-50%);-webkit-text-stroke:0.22px #e9e9f0;">server requests</h2>
<svg class="s" style="left:0px;top:0px" width="1040" height="581" viewBox="0 0 1040 581" >
<path d="M33.0 369.80H671.6 M33.0 331.63H671.6 M33.0 293.47H671.6 M33.0 255.30H671.6 M35.00 255.3V369.8 M88.22 255.3V369.8 M141.44 255.3V369.8 M194.66 255.3V369.8 M247.88 255.3V369.8 M301.10 255.3V369.8 M354.32 255.3V369.8 M407.54 255.3V369.8 M460.76 255.3V369.8 M513.98 255.3V369.8 M567.20 255.3V369.8 M620.42 255.3V369.8" stroke="#35373c" stroke-width="1" fill="none"/>
<path d="M33.00 276.18 L35.67 278.32 L38.34 282.51 L41.01 279.34 L43.67 285.14 L46.34 282.54 L49.01 281.92 L51.68 283.17 L54.35 283.39 L57.02 283.35 L59.69 281.56 L62.35 282.10 L65.02 283.57 L67.69 280.73 L70.36 276.01 L73.03 282.07 L75.70 281.57 L78.37 281.47 L81.04 277.50 L83.70 282.26 L86.37 280.75 L89.04 280.04 L91.71 282.42 L94.38 279.15 L97.05 275.15 L99.72 282.74 L102.38 277.64 L105.05 282.87 L107.72 281.25 L110.39 279.89 L113.06 279.57 L115.73 270.11 L118.40 277.56 L121.06 276.93 L123.73 281.21 L126.40 283.48 L129.07 283.29 L131.74 281.65 L134.41 279.60 L137.08 282.11 L139.74 280.09 L142.41 285.37 L145.08 283.24 L147.75 278.63 L150.42 284.97 L153.09 282.69 L155.76 283.38 L158.43 280.73 L161.09 282.19 L163.76 282.82 L166.43 280.87 L169.10 285.44 L171.77 280.27 L174.44 277.43 L177.11 282.27 L179.77 285.24 L182.44 281.96 L185.11 281.09 L187.78 282.25 L190.45 281.37 L193.12 284.08 L195.79 282.88 L198.45 279.71 L201.12 276.46 L203.79 280.92 L206.46 278.75 L209.13 286.36 L211.80 286.36 L214.47 283.82 L217.13 282.02 L219.80 278.69 L222.47 281.00 L225.14 283.33 L227.81 284.34 L230.48 284.35 L233.15 281.44 L235.82 280.92 L238.48 279.47 L241.15 281.89 L243.82 283.60 L246.49 284.08 L249.16 284.79 L251.83 282.89 L254.50 282.81 L257.16 278.80 L259.83 281.03 L262.50 283.50 L265.17 285.36 L267.84 284.97 L270.51 282.98 L273.18 275.79 L275.84 276.92 L278.51 281.29 L281.18 283.69 L283.85 281.25 L286.52 283.06 L289.19 278.65 L291.86 279.07 L294.52 279.12 L297.19 274.06 L299.86 282.59 L302.53 282.46 L305.20 277.67 L307.87 282.88 L310.54 282.77 L313.21 283.93 L315.87 286.47 L318.54 285.86 L321.21 286.39 L323.88 278.24 L326.55 278.21 L329.22 279.72 L331.89 282.25 L334.55 283.90 L337.22 282.23 L339.89 283.25 L342.56 283.60 L345.23 282.96 L347.90 283.91 L350.57 284.23 L353.23 280.42 L355.90 277.87 L358.57 280.66 L361.24 277.13 L363.91 282.57 L366.58 283.99 L369.25 280.10 L371.91 288.93 L374.58 284.48 L377.25 283.02 L379.92 281.06 L382.59 279.38 L385.26 279.21 L387.93 279.93 L390.59 284.63 L393.26 282.59 L395.93 281.32 L398.60 283.30 L401.27 275.86 L403.94 279.79 L406.61 275.33 L409.28 277.70 L411.94 282.07 L414.61 283.52 L417.28 283.97 L419.95 280.24 L422.62 284.70 L425.29 279.20 L427.96 279.33 L430.62 280.50 L433.29 278.77 L435.96 278.63 L438.63 276.87 L441.30 282.53 L443.97 280.17 L446.64 286.32 L449.30 285.83 L451.97 280.92 L454.64 282.20 L457.31 281.37 L459.98 281.80 L462.65 281.11 L465.32 282.70 L467.98 276.79 L470.65 278.39 L473.32 283.74 L475.99 289.04 L478.66 284.12 L481.33 282.60 L484.00 279.82 L486.67 285.66 L489.33 286.60 L492.00 282.55 L494.67 281.70 L497.34 279.88 L500.01 282.69 L502.68 279.40 L505.35 285.57 L508.01 277.08 L510.68 280.05 L513.35 275.52 L516.02 281.83 L518.69 281.15 L521.36 282.69 L524.03 282.60 L526.69 286.01 L529.36 285.35 L532.03 280.17 L534.70 285.35 L537.37 285.95 L540.04 297.48 L542.71 299.87 L545.37 300.59 L548.04 295.36 L550.71 289.15 L553.38 286.96 L556.05 288.22 L558.72 273.81 L561.39 271.30 L564.06 270.03 L566.72 267.86 L569.39 266.84 L572.06 271.85 L574.73 267.36 L577.40 265.84 L580.07 267.81 L582.74 273.38 L585.40 278.81 L588.07 272.73 L590.74 273.07 L593.41 280.04 L596.08 282.42 L598.75 284.80 L601.42 280.86 L604.08 276.38 L606.75 279.86 L609.42 279.37 L612.09 281.67 L614.76 284.37 L617.43 284.15 L620.10 282.55 L622.76 278.37 L625.43 284.00 L628.10 280.59 L630.77 284.40 L633.44 281.27 L636.11 280.84 L638.78 281.55 L641.45 279.40 L644.11 280.77 L646.78 283.48 L649.45 281.63 L652.12 275.34 L654.79 278.82 L657.46 280.30 L660.13 277.69 L662.79 276.59 L665.46 280.24 L668.13 285.98 L670.80 279.99 L670.80 369.80 L33.00 369.80 Z" fill="#16335c"/>
<path d="M33.00 300.55 L35.67 302.94 L38.34 304.29 L41.01 304.45 L43.67 306.87 L46.34 305.87 L49.01 302.96 L51.68 306.93 L54.35 304.76 L57.02 307.26 L59.69 305.95 L62.35 306.51 L65.02 306.58 L67.69 305.83 L70.36 301.46 L73.03 303.29 L75.70 304.60 L78.37 306.95 L81.04 301.92 L83.70 304.89 L86.37 302.88 L89.04 304.92 L91.71 303.61 L94.38 303.38 L97.05 299.80 L99.72 303.95 L102.38 299.28 L105.05 304.66 L107.72 304.16 L110.39 302.37 L113.06 305.09 L115.73 296.37 L118.40 300.68 L121.06 301.50 L123.73 301.84 L126.40 304.07 L129.07 306.96 L131.74 306.41 L134.41 304.65 L137.08 307.98 L139.74 304.97 L142.41 307.34 L145.08 307.42 L147.75 303.49 L150.42 305.81 L153.09 304.82 L155.76 303.93 L158.43 301.15 L161.09 304.42 L163.76 306.40 L166.43 305.54 L169.10 306.05 L171.77 302.53 L174.44 302.28 L177.11 306.00 L179.77 307.34 L182.44 302.57 L185.11 303.27 L187.78 302.96 L190.45 303.83 L193.12 306.64 L195.79 304.37 L198.45 302.92 L201.12 297.96 L203.79 302.81 L206.46 302.27 L209.13 307.09 L211.80 306.70 L214.47 306.15 L217.13 304.24 L219.80 302.79 L222.47 302.27 L225.14 304.69 L227.81 304.44 L230.48 306.25 L233.15 302.97 L235.82 303.25 L238.48 303.00 L241.15 302.30 L243.82 308.16 L246.49 307.61 L249.16 308.19 L251.83 304.64 L254.50 304.17 L257.16 299.07 L259.83 300.86 L262.50 302.45 L265.17 304.73 L267.84 304.59 L270.51 303.48 L273.18 299.57 L275.84 300.72 L278.51 304.07 L281.18 303.49 L283.85 302.29 L286.52 305.96 L289.19 302.43 L291.86 301.70 L294.52 302.89 L297.19 299.00 L299.86 304.45 L302.53 304.75 L305.20 301.74 L307.87 305.15 L310.54 306.65 L313.21 306.12 L315.87 306.75 L318.54 307.96 L321.21 307.18 L323.88 302.58 L326.55 303.13 L329.22 303.27 L331.89 307.08 L334.55 305.52 L337.22 304.44 L339.89 304.12 L342.56 304.14 L345.23 306.99 L347.90 304.98 L350.57 309.18 L353.23 304.07 L355.90 301.63 L358.57 301.67 L361.24 302.17 L363.91 307.15 L366.58 304.97 L369.25 301.07 L371.91 310.02 L374.58 307.25 L377.25 304.36 L379.92 305.79 L382.59 303.24 L385.26 303.78 L387.93 302.67 L390.59 309.18 L393.26 306.61 L395.93 306.21 L398.60 307.59 L401.27 303.05 L403.94 306.71 L406.61 301.86 L409.28 301.61 L411.94 304.90 L414.61 306.07 L417.28 306.91 L419.95 307.08 L422.62 308.83 L425.29 305.47 L427.96 302.79 L430.62 305.22 L433.29 301.72 L435.96 301.79 L438.63 302.15 L441.30 307.46 L443.97 306.18 L446.64 308.73 L449.30 307.69 L451.97 301.71 L454.64 304.05 L457.31 306.99 L459.98 305.61 L462.65 304.04 L465.32 305.09 L467.98 301.20 L470.65 302.32 L473.32 304.73 L475.99 309.17 L478.66 305.25 L481.33 307.13 L484.00 303.99 L486.67 307.11 L489.33 307.80 L492.00 304.39 L494.67 305.58 L497.34 304.03 L500.01 304.27 L502.68 301.06 L505.35 307.28 L508.01 302.18 L510.68 303.80 L513.35 300.59 L516.02 303.75 L518.69 304.62 L521.36 306.32 L524.03 307.72 L526.69 308.27 L529.36 306.81 L532.03 304.48 L534.70 309.96 L537.37 307.39 L540.04 316.57 L542.71 317.00 L545.37 319.56 L548.04 317.18 L550.71 309.27 L553.38 308.21 L556.05 310.76 L558.72 296.95 L561.39 296.92 L564.06 299.32 L566.72 299.94 L569.39 298.36 L572.06 300.63 L574.73 298.32 L577.40 297.04 L580.07 296.56 L582.74 298.14 L585.40 301.55 L588.07 299.10 L590.74 299.75 L593.41 303.08 L596.08 303.58 L598.75 305.75 L601.42 305.49 L604.08 301.53 L606.75 303.17 L609.42 303.00 L612.09 305.50 L614.76 305.62 L617.43 306.89 L620.10 305.43 L622.76 302.95 L625.43 305.61 L628.10 304.86 L630.77 305.73 L633.44 304.77 L636.11 305.59 L638.78 302.47 L641.45 301.61 L644.11 301.06 L646.78 306.09 L649.45 304.76 L652.12 300.64 L654.79 302.22 L657.46 305.49 L660.13 302.28 L662.79 301.34 L665.46 302.31 L668.13 306.75 L670.80 303.44 L670.80 369.80 L33.00 369.80 Z" fill="#21507f"/>
<path d="M33.00 325.11 L35.67 327.59 L38.34 328.13 L41.01 324.34 L43.67 328.79 L46.34 327.31 L49.01 324.58 L51.68 326.56 L54.35 324.62 L57.02 328.33 L59.69 326.17 L62.35 327.53 L65.02 325.54 L67.69 325.24 L70.36 324.00 L73.03 324.77 L75.70 326.53 L78.37 329.85 L81.04 322.80 L83.70 324.42 L86.37 325.89 L89.04 327.43 L91.71 326.33 L94.38 326.18 L97.05 324.02 L99.72 325.46 L102.38 322.22 L105.05 325.94 L107.72 326.31 L110.39 324.90 L113.06 327.50 L115.73 320.80 L118.40 325.44 L121.06 324.51 L123.73 324.18 L126.40 325.71 L129.07 329.22 L131.74 326.38 L134.41 324.40 L137.08 328.81 L139.74 328.07 L142.41 327.45 L145.08 326.68 L147.75 322.59 L150.42 324.73 L153.09 325.14 L155.76 326.13 L158.43 324.52 L161.09 325.41 L163.76 327.22 L166.43 325.97 L169.10 326.82 L171.77 325.65 L174.44 324.32 L177.11 326.26 L179.77 327.05 L182.44 325.70 L185.11 326.51 L187.78 326.40 L190.45 324.45 L193.12 328.74 L195.79 328.41 L198.45 325.72 L201.12 321.90 L203.79 323.42 L206.46 326.01 L209.13 326.77 L211.80 327.41 L214.47 325.55 L217.13 327.43 L219.80 326.05 L222.47 326.84 L225.14 328.65 L227.81 328.78 L230.48 328.82 L233.15 327.48 L235.82 326.54 L238.48 324.42 L241.15 326.37 L243.82 329.38 L246.49 327.39 L249.16 327.50 L251.83 325.74 L254.50 324.60 L257.16 323.19 L259.83 325.08 L262.50 322.75 L265.17 324.24 L267.84 326.02 L270.51 323.55 L273.18 321.54 L275.84 323.99 L278.51 324.68 L281.18 324.93 L283.85 326.06 L286.52 327.59 L289.19 323.58 L291.86 325.62 L294.52 326.81 L297.19 323.16 L299.86 327.39 L302.53 326.30 L305.20 324.67 L307.87 328.85 L310.54 329.18 L313.21 326.46 L315.87 327.20 L318.54 329.29 L321.21 330.34 L323.88 324.84 L326.55 325.40 L329.22 326.51 L331.89 327.08 L334.55 327.60 L337.22 325.44 L339.89 326.29 L342.56 327.53 L345.23 327.94 L347.90 328.66 L350.57 329.06 L353.23 325.90 L355.90 323.47 L358.57 322.10 L361.24 324.05 L363.91 328.76 L366.58 326.58 L369.25 323.62 L371.91 329.24 L374.58 328.23 L377.25 327.30 L379.92 326.09 L382.59 326.50 L385.26 324.34 L387.93 324.97 L390.59 329.30 L393.26 327.83 L395.93 327.25 L398.60 327.22 L401.27 325.57 L403.94 328.62 L406.61 324.62 L409.28 323.74 L411.94 326.99 L414.61 327.86 L417.28 327.89 L419.95 330.53 L422.62 328.92 L425.29 329.17 L427.96 326.70 L430.62 327.38 L433.29 325.04 L435.96 324.71 L438.63 324.44 L441.30 328.07 L443.97 326.75 L446.64 329.45 L449.30 328.61 L451.97 325.64 L454.64 325.20 L457.31 328.00 L459.98 327.08 L462.65 327.39 L465.32 326.97 L467.98 323.06 L470.65 322.68 L473.32 324.89 L475.99 328.44 L478.66 325.10 L481.33 327.69 L484.00 327.45 L486.67 328.86 L489.33 327.49 L492.00 325.45 L494.67 325.36 L497.34 325.84 L500.01 326.00 L502.68 324.50 L505.35 328.23 L508.01 325.46 L510.68 324.78 L513.35 324.80 L516.02 326.22 L518.69 324.27 L521.36 329.24 L524.03 328.40 L526.69 328.87 L529.36 326.66 L532.03 327.01 L534.70 328.78 L537.37 327.84 L540.04 334.55 L542.71 334.98 L545.37 335.28 L548.04 332.69 L550.71 330.05 L553.38 329.08 L556.05 330.35 L558.72 320.92 L561.39 320.83 L564.06 319.33 L566.72 319.03 L569.39 320.14 L572.06 320.72 L574.73 321.03 L577.40 318.93 L580.07 319.44 L582.74 320.57 L585.40 324.98 L588.07 322.79 L590.74 322.31 L593.41 325.27 L596.08 324.24 L598.75 325.20 L601.42 325.10 L604.08 324.70 L606.75 323.57 L609.42 324.05 L612.09 326.33 L614.76 327.91 L617.43 329.14 L620.10 329.05 L622.76 324.52 L625.43 326.69 L628.10 327.48 L630.77 329.15 L633.44 328.80 L636.11 326.89 L638.78 326.45 L641.45 326.46 L644.11 325.42 L646.78 326.14 L649.45 325.82 L652.12 323.97 L654.79 325.59 L657.46 324.97 L660.13 323.33 L662.79 324.37 L665.46 325.59 L668.13 328.66 L670.80 323.51 L670.80 369.80 L33.00 369.80 Z" fill="#3f648c"/>
<path d="M33.00 349.72 L35.67 347.82 L38.34 347.85 L41.01 348.57 L43.67 349.34 L46.34 347.34 L49.01 347.16 L51.68 348.24 L54.35 348.52 L57.02 349.62 L59.69 350.43 L62.35 349.09 L65.02 348.37 L67.69 349.83 L70.36 347.67 L73.03 349.40 L75.70 349.74 L78.37 350.00 L81.04 346.70 L83.70 347.15 L86.37 346.89 L89.04 348.04 L91.71 350.16 L94.38 349.27 L97.05 348.69 L99.72 349.63 L102.38 347.01 L105.05 348.86 L107.72 349.61 L110.39 347.59 L113.06 349.34 L115.73 346.72 L118.40 348.16 L121.06 348.32 L123.73 348.99 L126.40 348.70 L129.07 349.79 L131.74 350.10 L134.41 347.42 L137.08 349.10 L139.74 347.65 L142.41 349.15 L145.08 346.66 L147.75 346.65 L150.42 347.19 L153.09 347.31 L155.76 347.91 L158.43 347.72 L161.09 349.72 L163.76 348.54 L166.43 347.38 L169.10 349.18 L171.77 346.84 L174.44 346.85 L177.11 348.64 L179.77 348.98 L182.44 348.72 L185.11 348.64 L187.78 346.72 L190.45 348.83 L193.12 350.40 L195.79 350.03 L198.45 347.59 L201.12 346.52 L203.79 348.22 L206.46 348.44 L209.13 348.13 L211.80 347.62 L214.47 349.28 L217.13 348.13 L219.80 348.11 L222.47 348.10 L225.14 349.69 L227.81 349.85 L230.48 348.94 L233.15 347.00 L235.82 348.75 L238.48 348.23 L241.15 349.27 L243.82 350.17 L246.49 350.06 L249.16 347.35 L251.83 347.33 L254.50 348.67 L257.16 347.73 L259.83 347.52 L262.50 346.68 L265.17 346.61 L267.84 348.33 L270.51 346.47 L273.18 346.47 L275.84 347.71 L278.51 346.99 L281.18 348.34 L283.85 349.00 L286.52 349.24 L289.19 347.32 L291.86 349.69 L294.52 350.02 L297.19 347.38 L299.86 347.29 L302.53 348.21 L305.20 347.40 L307.87 350.02 L310.54 349.61 L313.21 349.34 L315.87 348.97 L318.54 349.87 L321.21 350.23 L323.88 349.03 L326.55 346.82 L329.22 346.36 L331.89 347.31 L334.55 348.50 L337.22 349.13 L339.89 346.85 L342.56 348.02 L345.23 347.79 L347.90 350.18 L350.57 349.54 L353.23 347.18 L355.90 347.02 L358.57 346.85 L361.24 347.91 L363.91 348.61 L366.58 348.00 L369.25 347.20 L371.91 348.95 L374.58 348.49 L377.25 349.11 L379.92 347.77 L382.59 350.01 L385.26 347.76 L387.93 346.90 L390.59 349.92 L393.26 348.24 L395.93 347.70 L398.60 347.03 L401.27 348.07 L403.94 349.32 L406.61 348.67 L409.28 346.60 L411.94 346.90 L414.61 349.77 L417.28 350.26 L419.95 350.32 L422.62 350.38 L425.29 349.00 L427.96 349.60 L430.62 347.17 L433.29 347.86 L435.96 349.71 L438.63 348.54 L441.30 349.06 L443.97 348.66 L446.64 349.61 L449.30 349.92 L451.97 349.79 L454.64 348.92 L457.31 347.69 L459.98 348.36 L462.65 349.97 L465.32 347.69 L467.98 346.83 L470.65 347.12 L473.32 347.46 L475.99 350.11 L478.66 348.98 L481.33 349.92 L484.00 347.81 L486.67 349.40 L489.33 347.91 L492.00 349.15 L494.67 347.90 L497.34 349.23 L500.01 350.24 L502.68 349.13 L505.35 348.99 L508.01 347.14 L510.68 348.99 L513.35 348.49 L516.02 348.04 L518.69 346.95 L521.36 349.65 L524.03 348.25 L526.69 348.31 L529.36 347.57 L532.03 347.32 L534.70 350.27 L537.37 350.56 L540.04 352.60 L542.71 354.06 L545.37 355.86 L548.04 352.49 L550.71 350.34 L553.38 351.02 L556.05 349.88 L558.72 345.76 L561.39 346.25 L564.06 345.75 L566.72 345.25 L569.39 342.54 L572.06 342.55 L574.73 343.64 L577.40 343.54 L580.07 346.14 L582.74 346.12 L585.40 347.53 L588.07 346.60 L590.74 346.75 L593.41 347.66 L596.08 349.25 L598.75 350.16 L601.42 348.98 L604.08 349.29 L606.75 347.65 L609.42 347.07 L612.09 347.48 L614.76 348.61 L617.43 349.47 L620.10 348.97 L622.76 348.47 L625.43 347.74 L628.10 346.86 L630.77 349.74 L633.44 348.69 L636.11 348.37 L638.78 347.46 L641.45 346.77 L644.11 347.17 L646.78 347.72 L649.45 347.34 L652.12 347.53 L654.79 346.94 L657.46 347.45 L660.13 347.78 L662.79 349.09 L665.46 347.07 L668.13 348.60 L670.80 348.01 L670.80 369.80 L33.00 369.80 Z" fill="#7b93a0"/>
<path d="M33.00 276.18 L35.67 278.32 L38.34 282.51 L41.01 279.34 L43.67 285.14 L46.34 282.54 L49.01 281.92 L51.68 283.17 L54.35 283.39 L57.02 283.35 L59.69 281.56 L62.35 282.10 L65.02 283.57 L67.69 280.73 L70.36 276.01 L73.03 282.07 L75.70 281.57 L78.37 281.47 L81.04 277.50 L83.70 282.26 L86.37 280.75 L89.04 280.04 L91.71 282.42 L94.38 279.15 L97.05 275.15 L99.72 282.74 L102.38 277.64 L105.05 282.87 L107.72 281.25 L110.39 279.89 L113.06 279.57 L115.73 270.11 L118.40 277.56 L121.06 276.93 L123.73 281.21 L126.40 283.48 L129.07 283.29 L131.74 281.65 L134.41 279.60 L137.08 282.11 L139.74 280.09 L142.41 285.37 L145.08 283.24 L147.75 278.63 L150.42 284.97 L153.09 282.69 L155.76 283.38 L158.43 280.73 L161.09 282.19 L163.76 282.82 L166.43 280.87 L169.10 285.44 L171.77 280.27 L174.44 277.43 L177.11 282.27 L179.77 285.24 L182.44 281.96 L185.11 281.09 L187.78 282.25 L190.45 281.37 L193.12 284.08 L195.79 282.88 L198.45 279.71 L201.12 276.46 L203.79 280.92 L206.46 278.75 L209.13 286.36 L211.80 286.36 L214.47 283.82 L217.13 282.02 L219.80 278.69 L222.47 281.00 L225.14 283.33 L227.81 284.34 L230.48 284.35 L233.15 281.44 L235.82 280.92 L238.48 279.47 L241.15 281.89 L243.82 283.60 L246.49 284.08 L249.16 284.79 L251.83 282.89 L254.50 282.81 L257.16 278.80 L259.83 281.03 L262.50 283.50 L265.17 285.36 L267.84 284.97 L270.51 282.98 L273.18 275.79 L275.84 276.92 L278.51 281.29 L281.18 283.69 L283.85 281.25 L286.52 283.06 L289.19 278.65 L291.86 279.07 L294.52 279.12 L297.19 274.06 L299.86 282.59 L302.53 282.46 L305.20 277.67 L307.87 282.88 L310.54 282.77 L313.21 283.93 L315.87 286.47 L318.54 285.86 L321.21 286.39 L323.88 278.24 L326.55 278.21 L329.22 279.72 L331.89 282.25 L334.55 283.90 L337.22 282.23 L339.89 283.25 L342.56 283.60 L345.23 282.96 L347.90 283.91 L350.57 284.23 L353.23 280.42 L355.90 277.87 L358.57 280.66 L361.24 277.13 L363.91 282.57 L366.58 283.99 L369.25 280.10 L371.91 288.93 L374.58 284.48 L377.25 283.02 L379.92 281.06 L382.59 279.38 L385.26 279.21 L387.93 279.93 L390.59 284.63 L393.26 282.59 L395.93 281.32 L398.60 283.30 L401.27 275.86 L403.94 279.79 L406.61 275.33 L409.28 277.70 L411.94 282.07 L414.61 283.52 L417.28 283.97 L419.95 280.24 L422.62 284.70 L425.29 279.20 L427.96 279.33 L430.62 280.50 L433.29 278.77 L435.96 278.63 L438.63 276.87 L441.30 282.53 L443.97 280.17 L446.64 286.32 L449.30 285.83 L451.97 280.92 L454.64 282.20 L457.31 281.37 L459.98 281.80 L462.65 281.11 L465.32 282.70 L467.98 276.79 L470.65 278.39 L473.32 283.74 L475.99 289.04 L478.66 284.12 L481.33 282.60 L484.00 279.82 L486.67 285.66 L489.33 286.60 L492.00 282.55 L494.67 281.70 L497.34 279.88 L500.01 282.69 L502.68 279.40 L505.35 285.57 L508.01 277.08 L510.68 280.05 L513.35 275.52 L516.02 281.83 L518.69 281.15 L521.36 282.69 L524.03 282.60 L526.69 286.01 L529.36 285.35 L532.03 280.17 L534.70 285.35 L537.37 285.95 L540.04 297.48 L542.71 299.87 L545.37 300.59 L548.04 295.36 L550.71 289.15 L553.38 286.96 L556.05 288.22 L558.72 273.81 L561.39 271.30 L564.06 270.03 L566.72 267.86 L569.39 266.84 L572.06 271.85 L574.73 267.36 L577.40 265.84 L580.07 267.81 L582.74 273.38 L585.40 278.81 L588.07 272.73 L590.74 273.07 L593.41 280.04 L596.08 282.42 L598.75 284.80 L601.42 280.86 L604.08 276.38 L606.75 279.86 L609.42 279.37 L612.09 281.67 L614.76 284.37 L617.43 284.15 L620.10 282.55 L622.76 278.37 L625.43 284.00 L628.10 280.59 L630.77 284.40 L633.44 281.27 L636.11 280.84 L638.78 281.55 L641.45 279.40 L644.11 280.77 L646.78 283.48 L649.45 281.63 L652.12 275.34 L654.79 278.82 L657.46 280.30 L660.13 277.69 L662.79 276.59 L665.46 280.24 L668.13 285.98 L670.80 279.99" fill="none" stroke="#1e5aa6" stroke-width="0.7" stroke-opacity="0.9" stroke-linejoin="round"/>
<path d="M33.00 300.55 L35.67 302.94 L38.34 304.29 L41.01 304.45 L43.67 306.87 L46.34 305.87 L49.01 302.96 L51.68 306.93 L54.35 304.76 L57.02 307.26 L59.69 305.95 L62.35 306.51 L65.02 306.58 L67.69 305.83 L70.36 301.46 L73.03 303.29 L75.70 304.60 L78.37 306.95 L81.04 301.92 L83.70 304.89 L86.37 302.88 L89.04 304.92 L91.71 303.61 L94.38 303.38 L97.05 299.80 L99.72 303.95 L102.38 299.28 L105.05 304.66 L107.72 304.16 L110.39 302.37 L113.06 305.09 L115.73 296.37 L118.40 300.68 L121.06 301.50 L123.73 301.84 L126.40 304.07 L129.07 306.96 L131.74 306.41 L134.41 304.65 L137.08 307.98 L139.74 304.97 L142.41 307.34 L145.08 307.42 L147.75 303.49 L150.42 305.81 L153.09 304.82 L155.76 303.93 L158.43 301.15 L161.09 304.42 L163.76 306.40 L166.43 305.54 L169.10 306.05 L171.77 302.53 L174.44 302.28 L177.11 306.00 L179.77 307.34 L182.44 302.57 L185.11 303.27 L187.78 302.96 L190.45 303.83 L193.12 306.64 L195.79 304.37 L198.45 302.92 L201.12 297.96 L203.79 302.81 L206.46 302.27 L209.13 307.09 L211.80 306.70 L214.47 306.15 L217.13 304.24 L219.80 302.79 L222.47 302.27 L225.14 304.69 L227.81 304.44 L230.48 306.25 L233.15 302.97 L235.82 303.25 L238.48 303.00 L241.15 302.30 L243.82 308.16 L246.49 307.61 L249.16 308.19 L251.83 304.64 L254.50 304.17 L257.16 299.07 L259.83 300.86 L262.50 302.45 L265.17 304.73 L267.84 304.59 L270.51 303.48 L273.18 299.57 L275.84 300.72 L278.51 304.07 L281.18 303.49 L283.85 302.29 L286.52 305.96 L289.19 302.43 L291.86 301.70 L294.52 302.89 L297.19 299.00 L299.86 304.45 L302.53 304.75 L305.20 301.74 L307.87 305.15 L310.54 306.65 L313.21 306.12 L315.87 306.75 L318.54 307.96 L321.21 307.18 L323.88 302.58 L326.55 303.13 L329.22 303.27 L331.89 307.08 L334.55 305.52 L337.22 304.44 L339.89 304.12 L342.56 304.14 L345.23 306.99 L347.90 304.98 L350.57 309.18 L353.23 304.07 L355.90 301.63 L358.57 301.67 L361.24 302.17 L363.91 307.15 L366.58 304.97 L369.25 301.07 L371.91 310.02 L374.58 307.25 L377.25 304.36 L379.92 305.79 L382.59 303.24 L385.26 303.78 L387.93 302.67 L390.59 309.18 L393.26 306.61 L395.93 306.21 L398.60 307.59 L401.27 303.05 L403.94 306.71 L406.61 301.86 L409.28 301.61 L411.94 304.90 L414.61 306.07 L417.28 306.91 L419.95 307.08 L422.62 308.83 L425.29 305.47 L427.96 302.79 L430.62 305.22 L433.29 301.72 L435.96 301.79 L438.63 302.15 L441.30 307.46 L443.97 306.18 L446.64 308.73 L449.30 307.69 L451.97 301.71 L454.64 304.05 L457.31 306.99 L459.98 305.61 L462.65 304.04 L465.32 305.09 L467.98 301.20 L470.65 302.32 L473.32 304.73 L475.99 309.17 L478.66 305.25 L481.33 307.13 L484.00 303.99 L486.67 307.11 L489.33 307.80 L492.00 304.39 L494.67 305.58 L497.34 304.03 L500.01 304.27 L502.68 301.06 L505.35 307.28 L508.01 302.18 L510.68 303.80 L513.35 300.59 L516.02 303.75 L518.69 304.62 L521.36 306.32 L524.03 307.72 L526.69 308.27 L529.36 306.81 L532.03 304.48 L534.70 309.96 L537.37 307.39 L540.04 316.57 L542.71 317.00 L545.37 319.56 L548.04 317.18 L550.71 309.27 L553.38 308.21 L556.05 310.76 L558.72 296.95 L561.39 296.92 L564.06 299.32 L566.72 299.94 L569.39 298.36 L572.06 300.63 L574.73 298.32 L577.40 297.04 L580.07 296.56 L582.74 298.14 L585.40 301.55 L588.07 299.10 L590.74 299.75 L593.41 303.08 L596.08 303.58 L598.75 305.75 L601.42 305.49 L604.08 301.53 L606.75 303.17 L609.42 303.00 L612.09 305.50 L614.76 305.62 L617.43 306.89 L620.10 305.43 L622.76 302.95 L625.43 305.61 L628.10 304.86 L630.77 305.73 L633.44 304.77 L636.11 305.59 L638.78 302.47 L641.45 301.61 L644.11 301.06 L646.78 306.09 L649.45 304.76 L652.12 300.64 L654.79 302.22 L657.46 305.49 L660.13 302.28 L662.79 301.34 L665.46 302.31 L668.13 306.75 L670.80 303.44" fill="none" stroke="#3687d6" stroke-width="0.7" stroke-opacity="0.9" stroke-linejoin="round"/>
<path d="M33.00 325.11 L35.67 327.59 L38.34 328.13 L41.01 324.34 L43.67 328.79 L46.34 327.31 L49.01 324.58 L51.68 326.56 L54.35 324.62 L57.02 328.33 L59.69 326.17 L62.35 327.53 L65.02 325.54 L67.69 325.24 L70.36 324.00 L73.03 324.77 L75.70 326.53 L78.37 329.85 L81.04 322.80 L83.70 324.42 L86.37 325.89 L89.04 327.43 L91.71 326.33 L94.38 326.18 L97.05 324.02 L99.72 325.46 L102.38 322.22 L105.05 325.94 L107.72 326.31 L110.39 324.90 L113.06 327.50 L115.73 320.80 L118.40 325.44 L121.06 324.51 L123.73 324.18 L126.40 325.71 L129.07 329.22 L131.74 326.38 L134.41 324.40 L137.08 328.81 L139.74 328.07 L142.41 327.45 L145.08 326.68 L147.75 322.59 L150.42 324.73 L153.09 325.14 L155.76 326.13 L158.43 324.52 L161.09 325.41 L163.76 327.22 L166.43 325.97 L169.10 326.82 L171.77 325.65 L174.44 324.32 L177.11 326.26 L179.77 327.05 L182.44 325.70 L185.11 326.51 L187.78 326.40 L190.45 324.45 L193.12 328.74 L195.79 328.41 L198.45 325.72 L201.12 321.90 L203.79 323.42 L206.46 326.01 L209.13 326.77 L211.80 327.41 L214.47 325.55 L217.13 327.43 L219.80 326.05 L222.47 326.84 L225.14 328.65 L227.81 328.78 L230.48 328.82 L233.15 327.48 L235.82 326.54 L238.48 324.42 L241.15 326.37 L243.82 329.38 L246.49 327.39 L249.16 327.50 L251.83 325.74 L254.50 324.60 L257.16 323.19 L259.83 325.08 L262.50 322.75 L265.17 324.24 L267.84 326.02 L270.51 323.55 L273.18 321.54 L275.84 323.99 L278.51 324.68 L281.18 324.93 L283.85 326.06 L286.52 327.59 L289.19 323.58 L291.86 325.62 L294.52 326.81 L297.19 323.16 L299.86 327.39 L302.53 326.30 L305.20 324.67 L307.87 328.85 L310.54 329.18 L313.21 326.46 L315.87 327.20 L318.54 329.29 L321.21 330.34 L323.88 324.84 L326.55 325.40 L329.22 326.51 L331.89 327.08 L334.55 327.60 L337.22 325.44 L339.89 326.29 L342.56 327.53 L345.23 327.94 L347.90 328.66 L350.57 329.06 L353.23 325.90 L355.90 323.47 L358.57 322.10 L361.24 324.05 L363.91 328.76 L366.58 326.58 L369.25 323.62 L371.91 329.24 L374.58 328.23 L377.25 327.30 L379.92 326.09 L382.59 326.50 L385.26 324.34 L387.93 324.97 L390.59 329.30 L393.26 327.83 L395.93 327.25 L398.60 327.22 L401.27 325.57 L403.94 328.62 L406.61 324.62 L409.28 323.74 L411.94 326.99 L414.61 327.86 L417.28 327.89 L419.95 330.53 L422.62 328.92 L425.29 329.17 L427.96 326.70 L430.62 327.38 L433.29 325.04 L435.96 324.71 L438.63 324.44 L441.30 328.07 L443.97 326.75 L446.64 329.45 L449.30 328.61 L451.97 325.64 L454.64 325.20 L457.31 328.00 L459.98 327.08 L462.65 327.39 L465.32 326.97 L467.98 323.06 L470.65 322.68 L473.32 324.89 L475.99 328.44 L478.66 325.10 L481.33 327.69 L484.00 327.45 L486.67 328.86 L489.33 327.49 L492.00 325.45 L494.67 325.36 L497.34 325.84 L500.01 326.00 L502.68 324.50 L505.35 328.23 L508.01 325.46 L510.68 324.78 L513.35 324.80 L516.02 326.22 L518.69 324.27 L521.36 329.24 L524.03 328.40 L526.69 328.87 L529.36 326.66 L532.03 327.01 L534.70 328.78 L537.37 327.84 L540.04 334.55 L542.71 334.98 L545.37 335.28 L548.04 332.69 L550.71 330.05 L553.38 329.08 L556.05 330.35 L558.72 320.92 L561.39 320.83 L564.06 319.33 L566.72 319.03 L569.39 320.14 L572.06 320.72 L574.73 321.03 L577.40 318.93 L580.07 319.44 L582.74 320.57 L585.40 324.98 L588.07 322.79 L590.74 322.31 L593.41 325.27 L596.08 324.24 L598.75 325.20 L601.42 325.10 L604.08 324.70 L606.75 323.57 L609.42 324.05 L612.09 326.33 L614.76 327.91 L617.43 329.14 L620.10 329.05 L622.76 324.52 L625.43 326.69 L628.10 327.48 L630.77 329.15 L633.44 328.80 L636.11 326.89 L638.78 326.45 L641.45 326.46 L644.11 325.42 L646.78 326.14 L649.45 325.82 L652.12 323.97 L654.79 325.59 L657.46 324.97 L660.13 323.33 L662.79 324.37 L665.46 325.59 L668.13 328.66 L670.80 323.51" fill="none" stroke="#6aa7e8" stroke-width="0.7" stroke-opacity="0.9" stroke-linejoin="round"/>
<path d="M33.00 349.72 L35.67 347.82 L38.34 347.85 L41.01 348.57 L43.67 349.34 L46.34 347.34 L49.01 347.16 L51.68 348.24 L54.35 348.52 L57.02 349.62 L59.69 350.43 L62.35 349.09 L65.02 348.37 L67.69 349.83 L70.36 347.67 L73.03 349.40 L75.70 349.74 L78.37 350.00 L81.04 346.70 L83.70 347.15 L86.37 346.89 L89.04 348.04 L91.71 350.16 L94.38 349.27 L97.05 348.69 L99.72 349.63 L102.38 347.01 L105.05 348.86 L107.72 349.61 L110.39 347.59 L113.06 349.34 L115.73 346.72 L118.40 348.16 L121.06 348.32 L123.73 348.99 L126.40 348.70 L129.07 349.79 L131.74 350.10 L134.41 347.42 L137.08 349.10 L139.74 347.65 L142.41 349.15 L145.08 346.66 L147.75 346.65 L150.42 347.19 L153.09 347.31 L155.76 347.91 L158.43 347.72 L161.09 349.72 L163.76 348.54 L166.43 347.38 L169.10 349.18 L171.77 346.84 L174.44 346.85 L177.11 348.64 L179.77 348.98 L182.44 348.72 L185.11 348.64 L187.78 346.72 L190.45 348.83 L193.12 350.40 L195.79 350.03 L198.45 347.59 L201.12 346.52 L203.79 348.22 L206.46 348.44 L209.13 348.13 L211.80 347.62 L214.47 349.28 L217.13 348.13 L219.80 348.11 L222.47 348.10 L225.14 349.69 L227.81 349.85 L230.48 348.94 L233.15 347.00 L235.82 348.75 L238.48 348.23 L241.15 349.27 L243.82 350.17 L246.49 350.06 L249.16 347.35 L251.83 347.33 L254.50 348.67 L257.16 347.73 L259.83 347.52 L262.50 346.68 L265.17 346.61 L267.84 348.33 L270.51 346.47 L273.18 346.47 L275.84 347.71 L278.51 346.99 L281.18 348.34 L283.85 349.00 L286.52 349.24 L289.19 347.32 L291.86 349.69 L294.52 350.02 L297.19 347.38 L299.86 347.29 L302.53 348.21 L305.20 347.40 L307.87 350.02 L310.54 349.61 L313.21 349.34 L315.87 348.97 L318.54 349.87 L321.21 350.23 L323.88 349.03 L326.55 346.82 L329.22 346.36 L331.89 347.31 L334.55 348.50 L337.22 349.13 L339.89 346.85 L342.56 348.02 L345.23 347.79 L347.90 350.18 L350.57 349.54 L353.23 347.18 L355.90 347.02 L358.57 346.85 L361.24 347.91 L363.91 348.61 L366.58 348.00 L369.25 347.20 L371.91 348.95 L374.58 348.49 L377.25 349.11 L379.92 347.77 L382.59 350.01 L385.26 347.76 L387.93 346.90 L390.59 349.92 L393.26 348.24 L395.93 347.70 L398.60 347.03 L401.27 348.07 L403.94 349.32 L406.61 348.67 L409.28 346.60 L411.94 346.90 L414.61 349.77 L417.28 350.26 L419.95 350.32 L422.62 350.38 L425.29 349.00 L427.96 349.60 L430.62 347.17 L433.29 347.86 L435.96 349.71 L438.63 348.54 L441.30 349.06 L443.97 348.66 L446.64 349.61 L449.30 349.92 L451.97 349.79 L454.64 348.92 L457.31 347.69 L459.98 348.36 L462.65 349.97 L465.32 347.69 L467.98 346.83 L470.65 347.12 L473.32 347.46 L475.99 350.11 L478.66 348.98 L481.33 349.92 L484.00 347.81 L486.67 349.40 L489.33 347.91 L492.00 349.15 L494.67 347.90 L497.34 349.23 L500.01 350.24 L502.68 349.13 L505.35 348.99 L508.01 347.14 L510.68 348.99 L513.35 348.49 L516.02 348.04 L518.69 346.95 L521.36 349.65 L524.03 348.25 L526.69 348.31 L529.36 347.57 L532.03 347.32 L534.70 350.27 L537.37 350.56 L540.04 352.60 L542.71 354.06 L545.37 355.86 L548.04 352.49 L550.71 350.34 L553.38 351.02 L556.05 349.88 L558.72 345.76 L561.39 346.25 L564.06 345.75 L566.72 345.25 L569.39 342.54 L572.06 342.55 L574.73 343.64 L577.40 343.54 L580.07 346.14 L582.74 346.12 L585.40 347.53 L588.07 346.60 L590.74 346.75 L593.41 347.66 L596.08 349.25 L598.75 350.16 L601.42 348.98 L604.08 349.29 L606.75 347.65 L609.42 347.07 L612.09 347.48 L614.76 348.61 L617.43 349.47 L620.10 348.97 L622.76 348.47 L625.43 347.74 L628.10 346.86 L630.77 349.74 L633.44 348.69 L636.11 348.37 L638.78 347.46 L641.45 346.77 L644.11 347.17 L646.78 347.72 L649.45 347.34 L652.12 347.53 L654.79 346.94 L657.46 347.45 L660.13 347.78 L662.79 349.09 L665.46 347.07 L668.13 348.60 L670.80 348.01" fill="none" stroke="#cfe6f6" stroke-width="0.7" stroke-opacity="0.9" stroke-linejoin="round"/>
<path d="M35.00 255.3V369.8 M88.22 255.3V369.8 M141.44 255.3V369.8 M194.66 255.3V369.8 M247.88 255.3V369.8 M301.10 255.3V369.8 M354.32 255.3V369.8 M407.54 255.3V369.8 M460.76 255.3V369.8 M513.98 255.3V369.8 M567.20 255.3V369.8 M620.42 255.3V369.8 M33.0 331.63H671.6 M33.0 293.47H671.6" stroke="#ffffff" stroke-opacity="0.10" stroke-width="0.7" fill="none"/>
</svg>
<span class="t" style="left:28.60px;top:369.85px;font-size:8.56px;color:#dedee8;transform:translate(-100%,-50%);-webkit-text-stroke:0.12px #dedee8;letter-spacing:-0.3px;">0</span>
<span class="t" style="left:28.60px;top:331.68px;font-size:8.56px;color:#dedee8;transform:translate(-100%,-50%);-webkit-text-stroke:0.12px #dedee8;letter-spacing:-0.3px;">50</span>
<span class="t" style="left:28.60px;top:293.52px;font-size:8.56px;color:#dedee8;transform:translate(-100%,-50%);-webkit-text-stroke:0.12px #dedee8;letter-spacing:-0.3px;">100</span>
<span class="t" style="left:28.60px;top:255.35px;font-size:8.56px;color:#dedee8;transform:translate(-100%,-50%);-webkit-text-stroke:0.12px #dedee8;letter-spacing:-0.3px;">150</span>
<span class="t" style="left:35.20px;top:379.45px;font-size:8.56px;color:#dedee8;transform:translate(-50%,-50%);-webkit-text-stroke:0.12px #dedee8;letter-spacing:-0.3px;">16:50</span>
<span class="t" style="left:88.42px;top:379.45px;font-size:8.56px;color:#dedee8;transform:translate(-50%,-50%);-webkit-text-stroke:0.12px #dedee8;letter-spacing:-0.3px;">16:55</span>
<span class="t" style="left:141.64px;top:379.45px;font-size:8.56px;color:#dedee8;transform:translate(-50%,-50%);-webkit-text-stroke:0.12px #dedee8;letter-spacing:-0.3px;">17:00</span>
<span class="t" style="left:194.86px;top:379.45px;font-size:8.56px;color:#dedee8;transform:translate(-50%,-50%);-webkit-text-stroke:0.12px #dedee8;letter-spacing:-0.3px;">17:05</span>
<span class="t" style="left:248.08px;top:379.45px;font-size:8.56px;color:#dedee8;transform:translate(-50%,-50%);-webkit-text-stroke:0.12px #dedee8;letter-spacing:-0.3px;">17:10</span>
<span class="t" style="left:301.30px;top:379.45px;font-size:8.56px;color:#dedee8;transform:translate(-50%,-50%);-webkit-text-stroke:0.12px #dedee8;letter-spacing:-0.3px;">17:15</span>
<span class="t" style="left:354.52px;top:379.45px;font-size:8.56px;color:#dedee8;transform:translate(-50%,-50%);-webkit-text-stroke:0.12px #dedee8;letter-spacing:-0.3px;">17:20</span>
<span class="t" style="left:407.74px;top:379.45px;font-size:8.56px;color:#dedee8;transform:translate(-50%,-50%);-webkit-text-stroke:0.12px #dedee8;letter-spacing:-0.3px;">17:25</span>
<span class="t" style="left:460.96px;top:379.45px;font-size:8.56px;color:#dedee8;transform:translate(-50%,-50%);-webkit-text-stroke:0.12px #dedee8;letter-spacing:-0.3px;">17:30</span>
<span class="t" style="left:514.18px;top:379.45px;font-size:8.56px;color:#dedee8;transform:translate(-50%,-50%);-webkit-text-stroke:0.12px #dedee8;letter-spacing:-0.3px;">17:35</span>
<span class="t" style="left:567.40px;top:379.45px;font-size:8.56px;color:#dedee8;transform:translate(-50%,-50%);-webkit-text-stroke:0.12px #dedee8;letter-spacing:-0.3px;">17:40</span>
<span class="t" style="left:620.62px;top:379.45px;font-size:8.56px;color:#dedee8;transform:translate(-50%,-50%);-webkit-text-stroke:0.12px #dedee8;letter-spacing:-0.3px;">17:45</span>
<div class="b" style="left:21.5px;top:394.2px;width:8.7px;height:2.4px;border-radius:1.2px;background:#d9f6ff"></div>
<span class="t" style="left:38.80px;top:395.45px;font-size:8.5px;color:#dedee8;transform:translate(0,-50%);-webkit-text-stroke:0.12px #dedee8;letter-spacing:-0.42px;">web_server_01</span>
<div class="b" style="left:101.3px;top:394.2px;width:8.7px;height:2.4px;border-radius:1.2px;background:#5da5ee"></div>
<span class="t" style="left:118.70px;top:395.45px;font-size:8.5px;color:#dedee8;transform:translate(0,-50%);-webkit-text-stroke:0.12px #dedee8;letter-spacing:-0.42px;">web_server_02</span>
<div class="b" style="left:182px;top:394.2px;width:8.7px;height:2.4px;border-radius:1.2px;background:#2d8ae6"></div>
<span class="t" style="left:199.50px;top:395.45px;font-size:8.5px;color:#dedee8;transform:translate(0,-50%);-webkit-text-stroke:0.12px #dedee8;letter-spacing:-0.42px;">web_server_03</span>
<div class="b" style="left:262.7px;top:394.2px;width:8.7px;height:2.4px;border-radius:1.2px;background:#1a5296"></div>
<span class="t" style="left:280.50px;top:395.45px;font-size:8.5px;color:#dedee8;transform:translate(0,-50%);-webkit-text-stroke:0.12px #dedee8;letter-spacing:-0.42px;">web_server_04</span>
</section>
<section aria-label="Google hits">
<div class="p" style="left:693px;top:224px;width:337px;height:183px"></div>
<h2 class="t" style="left:699.00px;top:235.75px;font-size:9.3px;color:#e9e9f0;transform:translate(0,-50%);-webkit-text-stroke:0.22px #e9e9f0;">Google hits</h2>
<div class="b" style="left:699.1px;top:266.4px;width:60.2px;height:121.4px;background:#22252b;border-radius:1.5px;overflow:hidden"><div class="b" style="left:0;top:120.6px;width:60.2px;height:0.8px;background:#2d4a72;border-top:1.2px solid #6ea8f5"></div></div>
<span class="t" style="left:729.20px;top:258.05px;font-size:16px;color:#60a2f3;transform:translate(-50%,-50%);letter-spacing:0.2px;-webkit-text-stroke:0.15px #60a2f3;">0.400</span>
<span class="t" style="left:729.20px;top:395.45px;font-size:9.4px;color:#dedee8;transform:translate(-50%,-50%);letter-spacing:0.1px;">A-series</span>
<div class="b" style="left:765.4px;top:266.4px;width:60.2px;height:121.4px;background:#22252b;border-radius:1.5px;overflow:hidden"><div class="b" style="left:0;top:87.6px;width:60.2px;height:33.8px;background:#2d4a72;border-top:1.2px solid #6ea8f5"></div></div>
<span class="t" style="left:795.50px;top:258.05px;font-size:16px;color:#60a2f3;transform:translate(-50%,-50%);letter-spacing:0.2px;-webkit-text-stroke:0.15px #60a2f3;">27.7</span>
<span class="t" style="left:795.50px;top:395.45px;font-size:9.4px;color:#dedee8;transform:translate(-50%,-50%);letter-spacing:0.1px;">B-series</span>
<div class="b" style="left:831.7px;top:266.4px;width:60.2px;height:121.4px;background:#22252b;border-radius:1.5px;overflow:hidden"><div class="b" style="left:0;top:75.8px;width:60.2px;height:45.6px;background:#2d4a72;border-top:1.2px solid #6ea8f5"></div></div>
<span class="t" style="left:861.80px;top:258.05px;font-size:16px;color:#60a2f3;transform:translate(-50%,-50%);letter-spacing:0.2px;-webkit-text-stroke:0.15px #60a2f3;">37.1</span>
<span class="t" style="left:861.80px;top:395.45px;font-size:9.4px;color:#dedee8;transform:translate(-50%,-50%);letter-spacing:0.1px;">C-series</span>
<div class="b" style="left:898.0px;top:266.4px;width:60.2px;height:121.4px;background:#22252b;border-radius:1.5px;overflow:hidden"><div class="b" style="left:0;top:38.8px;width:60.2px;height:82.6px;background:#523b62;border-top:1.2px solid #b877d9"></div></div>
<span class="t" style="left:928.10px;top:258.05px;font-size:16px;color:#c88be6;transform:translate(-50%,-50%);letter-spacing:0.2px;-webkit-text-stroke:0.15px #c88be6;">66.5</span>
<span class="t" style="left:928.10px;top:395.45px;font-size:9.4px;color:#dedee8;transform:translate(-50%,-50%);letter-spacing:0.1px;">D-series</span>
<div class="b" style="left:964.3px;top:266.4px;width:60.2px;height:121.4px;background:#22252b;border-radius:1.5px;overflow:hidden"><div class="b" style="left:0;top:95.6px;width:60.2px;height:25.8px;background:#2d4a72;border-top:1.2px solid #6ea8f5"></div></div>
<span class="t" style="left:994.40px;top:258.05px;font-size:16px;color:#60a2f3;transform:translate(-50%,-50%);letter-spacing:0.2px;-webkit-text-stroke:0.15px #60a2f3;">21.2</span>
<span class="t" style="left:994.40px;top:395.45px;font-size:9.4px;color:#dedee8;transform:translate(-50%,-50%);letter-spacing:0.1px;">E-series</span>
</section>
<section aria-label="client side full page load">
<div class="p" style="left:10px;top:412px;width:1020px;height:160px"></div>
<h2 class="t" style="left:520.00px;top:423.65px;font-size:9.3px;color:#e9e9f0;transform:translate(-50%,-50%);-webkit-text-stroke:0.22px #e9e9f0;">client side full page load</h2>
<svg class="s" style="left:0px;top:0px" width="1040" height="581" viewBox="0 0 1040 581" >
<path d="M36.4 551.40H918.2 M36.4 529.86H918.2 M36.4 508.32H918.2 M36.4 486.78H918.2 M36.4 465.24H918.2 M36.4 443.70H918.2 M39.80 443.7V551.4 M113.20 443.7V551.4 M186.60 443.7V551.4 M260.00 443.7V551.4 M333.40 443.7V551.4 M406.80 443.7V551.4 M480.20 443.7V551.4 M553.60 443.7V551.4 M627.00 443.7V551.4 M700.40 443.7V551.4 M773.80 443.7V551.4 M847.20 443.7V551.4" stroke="#35373c" stroke-width="1" fill="none"/>
<clipPath id="cc"><rect x="36.4" y="441.7" width="881.8000000000001" height="109.69999999999999"/></clipPath><g clip-path="url(#cc)">
<rect x="10.58" y="479.03" width="39.1" height="72.37" fill="#e24d42"/>
<rect x="10.58" y="515.43" width="39.1" height="35.97" fill="#ef843c"/>
<rect x="10.58" y="537.94" width="39.1" height="13.46" fill="#eab839"/>
<rect x="10.58" y="549.68" width="39.1" height="1.72" fill="#f4d598"/>
<rect x="69.30" y="505.30" width="39.1" height="46.10" fill="#e24d42"/>
<rect x="69.30" y="525.12" width="39.1" height="26.28" fill="#ef843c"/>
<rect x="69.30" y="541.71" width="39.1" height="9.69" fill="#eab839"/>
<rect x="69.30" y="550.32" width="39.1" height="1.08" fill="#f4d598"/>
<rect x="128.02" y="483.76" width="39.1" height="67.64" fill="#e24d42"/>
<rect x="128.02" y="515.43" width="39.1" height="35.97" fill="#ef843c"/>
<rect x="128.02" y="536.97" width="39.1" height="14.43" fill="#eab839"/>
<rect x="128.02" y="549.68" width="39.1" height="1.72" fill="#f4d598"/>
<rect x="186.74" y="484.84" width="39.1" height="66.56" fill="#e24d42"/>
<rect x="186.74" y="515.64" width="39.1" height="35.76" fill="#ef843c"/>
<rect x="186.74" y="537.94" width="39.1" height="13.46" fill="#eab839"/>
<rect x="186.74" y="549.68" width="39.1" height="1.72" fill="#f4d598"/>
<rect x="245.46" y="490.44" width="39.1" height="60.96" fill="#e24d42"/>
<rect x="245.46" y="518.66" width="39.1" height="32.74" fill="#ef843c"/>
<rect x="245.46" y="538.91" width="39.1" height="12.49" fill="#eab839"/>
<rect x="245.46" y="550.11" width="39.1" height="1.29" fill="#f4d598"/>
<rect x="304.18" y="492.16" width="39.1" height="59.24" fill="#e24d42"/>
<rect x="304.18" y="517.15" width="39.1" height="34.25" fill="#ef843c"/>
<rect x="304.18" y="537.94" width="39.1" height="13.46" fill="#eab839"/>
<rect x="304.18" y="549.03" width="39.1" height="2.37" fill="#f4d598"/>
<rect x="362.90" y="492.16" width="39.1" height="59.24" fill="#e24d42"/>
<rect x="362.90" y="521.03" width="39.1" height="30.37" fill="#ef843c"/>
<rect x="362.90" y="538.91" width="39.1" height="12.49" fill="#eab839"/>
<rect x="362.90" y="549.46" width="39.1" height="1.94" fill="#f4d598"/>
<rect x="421.62" y="484.09" width="39.1" height="67.31" fill="#e24d42"/>
<rect x="421.62" y="513.70" width="39.1" height="37.70" fill="#ef843c"/>
<rect x="421.62" y="536.54" width="39.1" height="14.86" fill="#eab839"/>
<rect x="421.62" y="547.74" width="39.1" height="3.66" fill="#f4d598"/>
<rect x="480.34" y="465.89" width="39.1" height="85.51" fill="#e24d42"/>
<rect x="480.34" y="505.95" width="39.1" height="45.45" fill="#ef843c"/>
<rect x="480.34" y="534.81" width="39.1" height="16.59" fill="#eab839"/>
<rect x="480.34" y="547.09" width="39.1" height="4.31" fill="#f4d598"/>
<rect x="539.06" y="488.93" width="39.1" height="62.47" fill="#e24d42"/>
<rect x="539.06" y="516.07" width="39.1" height="35.33" fill="#ef843c"/>
<rect x="539.06" y="536.32" width="39.1" height="15.08" fill="#eab839"/>
<rect x="539.06" y="547.31" width="39.1" height="4.09" fill="#f4d598"/>
<rect x="597.78" y="465.89" width="39.1" height="85.51" fill="#e24d42"/>
<rect x="597.78" y="504.01" width="39.1" height="47.39" fill="#ef843c"/>
<rect x="597.78" y="532.01" width="39.1" height="19.39" fill="#eab839"/>
<rect x="597.78" y="545.58" width="39.1" height="5.82" fill="#f4d598"/>
<rect x="656.50" y="483.12" width="39.1" height="68.28" fill="#e24d42"/>
<rect x="656.50" y="514.78" width="39.1" height="36.62" fill="#ef843c"/>
<rect x="656.50" y="538.69" width="39.1" height="12.71" fill="#eab839"/>
<rect x="656.50" y="549.68" width="39.1" height="1.72" fill="#f4d598"/>
<rect x="715.22" y="468.90" width="39.1" height="82.50" fill="#e24d42"/>
<rect x="715.22" y="509.61" width="39.1" height="41.79" fill="#ef843c"/>
<rect x="715.22" y="535.25" width="39.1" height="16.15" fill="#eab839"/>
<rect x="715.22" y="546.66" width="39.1" height="4.74" fill="#f4d598"/>
<rect x="773.94" y="480.10" width="39.1" height="71.30" fill="#e24d42"/>
<rect x="773.94" y="509.61" width="39.1" height="41.79" fill="#ef843c"/>
<rect x="773.94" y="532.88" width="39.1" height="18.52" fill="#eab839"/>
<rect x="773.94" y="546.45" width="39.1" height="4.95" fill="#f4d598"/>
<rect x="832.66" y="466.96" width="39.1" height="84.44" fill="#e24d42"/>
<rect x="832.66" y="504.66" width="39.1" height="46.74" fill="#ef843c"/>
<rect x="832.66" y="529.86" width="39.1" height="21.54" fill="#eab839"/>
<rect x="832.66" y="546.01" width="39.1" height="5.38" fill="#f4d598"/>
<rect x="891.38" y="490.44" width="39.1" height="60.96" fill="#e24d42"/>
<rect x="891.38" y="519.74" width="39.1" height="31.66" fill="#ef843c"/>
<rect x="891.38" y="541.06" width="39.1" height="10.34" fill="#eab839"/>
<rect x="891.38" y="550.32" width="39.1" height="1.08" fill="#f4d598"/>
</g>
</svg>
<span class="t" style="left:32.80px;top:551.45px;font-size:8.56px;color:#dedee8;transform:translate(-100%,-50%);-webkit-text-stroke:0.12px #dedee8;letter-spacing:-0.3px;">0 ms</span>
<span class="t" style="left:32.80px;top:529.91px;font-size:8.56px;color:#dedee8;transform:translate(-100%,-50%);-webkit-text-stroke:0.12px #dedee8;letter-spacing:-0.3px;">1 s</span>
<span class="t" style="left:32.80px;top:508.37px;font-size:8.56px;color:#dedee8;transform:translate(-100%,-50%);-webkit-text-stroke:0.12px #dedee8;letter-spacing:-0.3px;">2 s</span>
<span class="t" style="left:32.80px;top:486.83px;font-size:8.56px;color:#dedee8;transform:translate(-100%,-50%);-webkit-text-stroke:0.12px #dedee8;letter-spacing:-0.3px;">3 s</span>
<span class="t" style="left:32.80px;top:465.29px;font-size:8.56px;color:#dedee8;transform:translate(-100%,-50%);-webkit-text-stroke:0.12px #dedee8;letter-spacing:-0.3px;">4 s</span>
<span class="t" style="left:32.80px;top:443.75px;font-size:8.56px;color:#dedee8;transform:translate(-100%,-50%);-webkit-text-stroke:0.12px #dedee8;letter-spacing:-0.3px;">5 s</span>
<span class="t" style="left:39.80px;top:560.85px;font-size:8.56px;color:#dedee8;transform:translate(-50%,-50%);-webkit-text-stroke:0.12px #dedee8;letter-spacing:-0.3px;">16:50</span>
<span class="t" style="left:113.20px;top:560.85px;font-size:8.56px;color:#dedee8;transform:translate(-50%,-50%);-webkit-text-stroke:0.12px #dedee8;letter-spacing:-0.3px;">16:55</span>
<span class="t" style="left:186.60px;top:560.85px;font-size:8.56px;color:#dedee8;transform:translate(-50%,-50%);-webkit-text-stroke:0.12px #dedee8;letter-spacing:-0.3px;">17:00</span>
<span class="t" style="left:260.00px;top:560.85px;font-size:8.56px;color:#dedee8;transform:translate(-50%,-50%);-webkit-text-stroke:0.12px #dedee8;letter-spacing:-0.3px;">17:05</span>
<span class="t" style="left:333.40px;top:560.85px;font-size:8.56px;color:#dedee8;transform:translate(-50%,-50%);-webkit-text-stroke:0.12px #dedee8;letter-spacing:-0.3px;">17:10</span>
<span class="t" style="left:406.80px;top:560.85px;font-size:8.56px;color:#dedee8;transform:translate(-50%,-50%);-webkit-text-stroke:0.12px #dedee8;letter-spacing:-0.3px;">17:15</span>
<span class="t" style="left:480.20px;top:560.85px;font-size:8.56px;color:#dedee8;transform:translate(-50%,-50%);-webkit-text-stroke:0.12px #dedee8;letter-spacing:-0.3px;">17:20</span>
<span class="t" style="left:553.60px;top:560.85px;font-size:8.56px;color:#dedee8;transform:translate(-50%,-50%);-webkit-text-stroke:0.12px #dedee8;letter-spacing:-0.3px;">17:25</span>
<span class="t" style="left:627.00px;top:560.85px;font-size:8.56px;color:#dedee8;transform:translate(-50%,-50%);-webkit-text-stroke:0.12px #dedee8;letter-spacing:-0.3px;">17:30</span>
<span class="t" style="left:700.40px;top:560.85px;font-size:8.56px;color:#dedee8;transform:translate(-50%,-50%);-webkit-text-stroke:0.12px #dedee8;letter-spacing:-0.3px;">17:35</span>
<span class="t" style="left:773.80px;top:560.85px;font-size:8.56px;color:#dedee8;transform:translate(-50%,-50%);-webkit-text-stroke:0.12px #dedee8;letter-spacing:-0.3px;">17:40</span>
<span class="t" style="left:847.20px;top:560.85px;font-size:8.56px;color:#dedee8;transform:translate(-50%,-50%);-webkit-text-stroke:0.12px #dedee8;letter-spacing:-0.3px;">17:45</span>
<span class="t" style="left:1015.50px;top:447.25px;font-size:8.56px;color:#31a4ea;transform:translate(-100%,-50%);-webkit-text-stroke:0.22px #31a4ea;letter-spacing:-0.3px;">avg</span>
<div class="b" style="left:932.6px;top:460.2px;width:8.7px;height:2.4px;border-radius:1.2px;background:#fdf3dc"></div>
<span class="t" style="left:947.50px;top:461.65px;font-size:8.56px;color:#dedee8;transform:translate(0,-50%);-webkit-text-stroke:0.12px #dedee8;letter-spacing:-0.3px;">upper_25</span>
<span class="t" style="left:1020.20px;top:461.65px;font-size:8.56px;color:#dedee8;transform:translate(-100%,-50%);-webkit-text-stroke:0.12px #dedee8;letter-spacing:-0.3px;">6.81 ms</span>
<div class="b" style="left:931px;top:469.8px;width:90.5px;height:16.4px;background:#22252b"></div>
<div class="b" style="left:932.6px;top:476.8px;width:8.7px;height:2.4px;border-radius:1.2px;background:#f5dc55"></div>
<span class="t" style="left:947.50px;top:478.20px;font-size:8.56px;color:#dedee8;transform:translate(0,-50%);-webkit-text-stroke:0.12px #dedee8;letter-spacing:-0.3px;">upper_50</span>
<span class="t" style="left:1020.20px;top:478.20px;font-size:8.56px;color:#dedee8;transform:translate(-100%,-50%);-webkit-text-stroke:0.12px #dedee8;letter-spacing:-0.3px;">142 ms</span>
<div class="b" style="left:932.6px;top:493.3px;width:8.7px;height:2.4px;border-radius:1.2px;background:#eab839"></div>
<span class="t" style="left:947.50px;top:494.75px;font-size:8.56px;color:#dedee8;transform:translate(0,-50%);-webkit-text-stroke:0.12px #dedee8;letter-spacing:-0.3px;">upper_75</span>
<span class="t" style="left:1020.20px;top:494.75px;font-size:8.56px;color:#dedee8;transform:translate(-100%,-50%);-webkit-text-stroke:0.12px #dedee8;letter-spacing:-0.3px;">535 ms</span>
<div class="b" style="left:931px;top:502.8px;width:90.5px;height:16.4px;background:#22252b"></div>
<div class="b" style="left:932.6px;top:509.8px;width:8.7px;height:2.4px;border-radius:1.2px;background:#ef843c"></div>
<span class="t" style="left:947.50px;top:511.30px;font-size:8.56px;color:#dedee8;transform:translate(0,-50%);-webkit-text-stroke:0.12px #dedee8;letter-spacing:-0.3px;">upper_90</span>
<span class="t" style="left:1020.20px;top:511.30px;font-size:8.56px;color:#dedee8;transform:translate(-100%,-50%);-webkit-text-stroke:0.12px #dedee8;letter-spacing:-0.3px;">1.04 s</span>
<div class="b" style="left:932.6px;top:526.4px;width:8.7px;height:2.4px;border-radius:1.2px;background:#e24d42"></div>
<span class="t" style="left:947.50px;top:527.85px;font-size:8.56px;color:#dedee8;transform:translate(0,-50%);-webkit-text-stroke:0.12px #dedee8;letter-spacing:-0.3px;">upper_95</span>
<span class="t" style="left:1020.20px;top:527.85px;font-size:8.56px;color:#dedee8;transform:translate(-100%,-50%);-webkit-text-stroke:0.12px #dedee8;letter-spacing:-0.3px;">1.46 s</span>
</section>
</main>
</div></body></html>
